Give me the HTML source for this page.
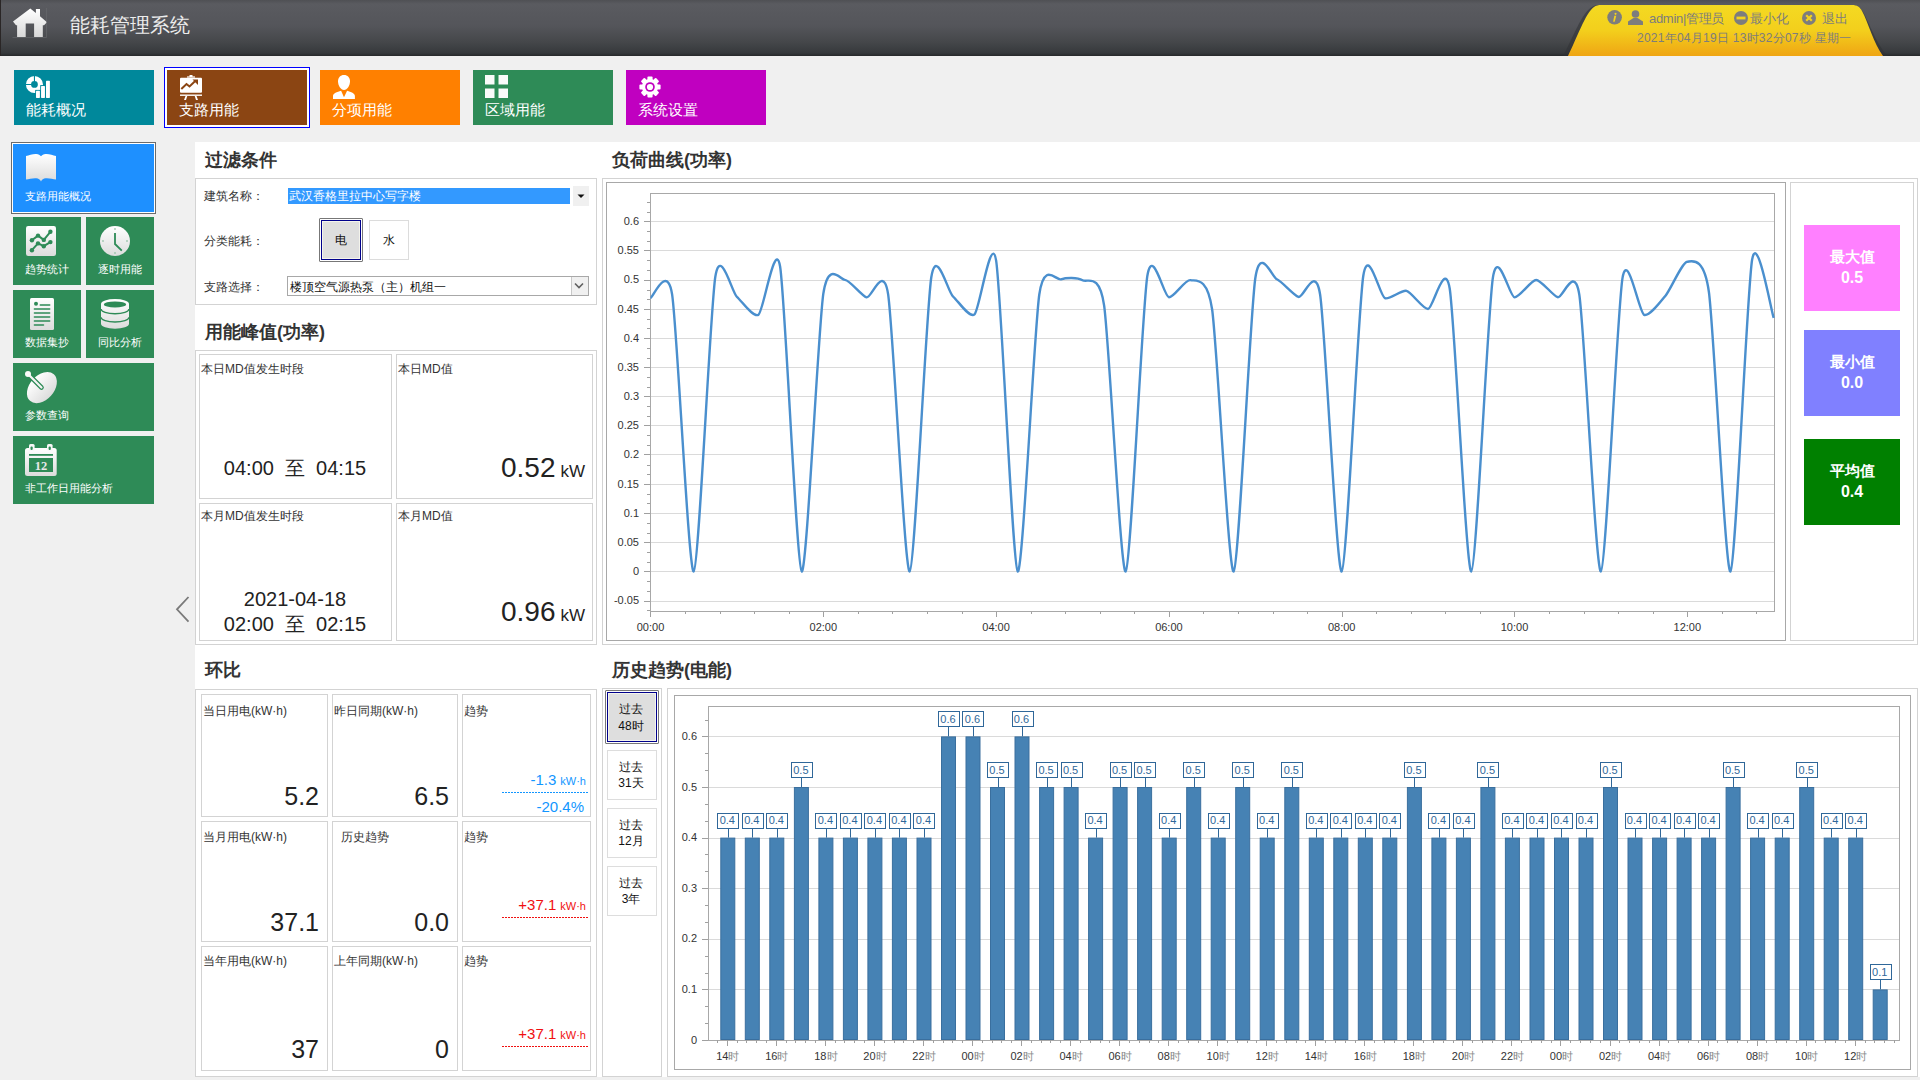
<!DOCTYPE html>
<html><head><meta charset="utf-8"><title>能耗管理系统</title>
<style>html,body{margin:0;padding:0;}body{width:1920px;height:1080px;overflow:hidden;position:relative;background:#f0f0f0;font-family:"Liberation Sans", sans-serif;}</style>
</head><body>
<div style="position:absolute;left:0;top:0;width:1920px;height:56px;background:linear-gradient(#4f5054 0px,#5a5b60 4px,#54555a 26px,#45474a 42px,#36393c 53px,#26282a 56px);"></div>
<div style="position:absolute;left:0;top:0;width:1px;height:56px;background:#2a2626;"></div>
<svg style="position:absolute;left:0;top:0" width="60" height="56" viewBox="0 0 60 56">
<defs><linearGradient id="hg" x1="0" y1="0" x2="0" y2="1"><stop offset="0" stop-color="#ffffff"/><stop offset="1" stop-color="#d8d8d8"/></linearGradient></defs>
<path d="M30.3 8.6 L35.9 13 L35.9 9.1 L40 9.1 L40 16.2 L47 22.3 L44 25.2 L42.8 25.2 L42.8 36.9 L34.1 36.9 L34.1 23.4 L25.7 23.4 L25.7 36.9 L17.1 36.9 L17.1 25.2 L16 25.2 L13 21.6 Z" fill="url(#hg)"/>
<path d="M12.5 37.5 H46.5 V8" stroke="#6a6b6f" stroke-width="0.6" fill="none"/>
</svg>
<div style="position:absolute;left:70px;top:11px;font-size:20px;line-height:28px;color:#ececec;font-family:'Liberation Sans', sans-serif;">能耗管理系统</div>
<svg style="position:absolute;left:1550px;top:0" width="350" height="56" viewBox="1550 0 350 56">
<defs><linearGradient id="tg" x1="0" y1="0" x2="0" y2="1"><stop offset="0" stop-color="#f4da22"/><stop offset="0.5" stop-color="#f3cf1c"/><stop offset="1" stop-color="#efa514"/></linearGradient></defs>
<path d="M1563 56 C1572 40 1582 12 1592 7 C1594 5.5 1596 5 1600 5 L1850 5 C1856 5 1860 7 1863 12 C1869 22 1877 46 1888 56 Z" fill="#2f3135" opacity="0.55"/>
<path d="M1568 56 C1576 40 1586 12 1594 7 C1596 5.5 1598 5 1602 5 L1852 5 C1857 5 1860 7 1862 11 C1868 22 1874 44 1883 56 Z" fill="url(#tg)"/>
</svg>
<svg style="position:absolute;left:1606px;top:9px" width="17" height="17" viewBox="0 0 17 17"><circle cx="8.6" cy="8.3" r="7.3" fill="#7d7d7d"/><path d="M9.6 3.8 a1 1 0 1 1 -0.1 0 Z M8.3 6.7 h2 l-1.6 6 h-1.6 z" fill="#f3d21e"/></svg>
<svg style="position:absolute;left:1627px;top:9px" width="17" height="17" viewBox="0 0 17 17"><circle cx="8.5" cy="5" r="3.8" fill="#7d7d7d"/><path d="M6.5 9 L10.5 9 L16 12.5 L16 16 L1 16 L1 12.5 Z" fill="#7d7d7d"/></svg>
<div style="position:absolute;left:1649px;top:10px;font-size:13px;line-height:18px;color:#7d7d7d;font-family:'Liberation Sans', sans-serif;white-space:nowrap;letter-spacing:-0.3px;">admin|管理员</div>
<svg style="position:absolute;left:1733px;top:10px" width="16" height="16" viewBox="0 0 16 16"><circle cx="8" cy="8" r="7" fill="#7d7d7d"/><rect x="3.5" y="6.6" width="9" height="2.8" fill="#f3d21e"/></svg>
<div style="position:absolute;left:1750px;top:10px;font-size:13px;line-height:18px;color:#7d7d7d;font-family:'Liberation Sans', sans-serif;white-space:nowrap;">最小化</div>
<svg style="position:absolute;left:1801px;top:10px" width="16" height="16" viewBox="0 0 16 16"><circle cx="8" cy="8" r="7" fill="#7d7d7d"/><path d="M5.2 5.2 L10.8 10.8 M10.8 5.2 L5.2 10.8" stroke="#f3d21e" stroke-width="2.2"/></svg>
<div style="position:absolute;left:1822px;top:10px;font-size:13px;line-height:18px;color:#7d7d7d;font-family:'Liberation Sans', sans-serif;white-space:nowrap;">退出</div>
<div style="position:absolute;left:1637px;top:30px;font-size:12px;line-height:17px;color:#7d7d7d;font-family:'Liberation Sans', sans-serif;white-space:nowrap;letter-spacing:0.25px;">2021年04月19日 13时32分07秒 星期一</div>
<div style="position:absolute;left:14px;top:70px;width:140px;height:55px;background:#00889b;"></div><div style="position:absolute;left:22px;top:72px;"><svg width="32" height="28" viewBox="0 0 32 28"><path d="M12.45 3.9 A8.55 8.55 0 1 0 12.45 21 A8.55 8.55 0 1 0 12.45 3.9 Z M12.45 9.05 A3.4 3.4 0 1 1 12.45 15.85 A3.4 3.4 0 1 1 12.45 9.05 Z" fill="#fff" fill-rule="evenodd"/><path d="M12.45 3 V9.5 M3 12.45 H9.5" stroke="#00889b" stroke-width="1.1"/><rect x="13.2" y="17.9" width="5.5" height="9.4" fill="#00889b"/><rect x="18.2" y="13.1" width="5.5" height="14" fill="#00889b"/><rect x="14" y="18.7" width="3.9" height="7.2" rx="0.6" fill="#fff"/><rect x="19.05" y="13.9" width="3.9" height="12" rx="0.6" fill="#fff"/><rect x="24" y="8.8" width="3.9" height="17.1" rx="0.6" fill="#fff"/></svg></div><div style="position:absolute;left:26px;top:100px;font-size:15px;line-height:20px;color:#fff;font-family:'Liberation Sans', sans-serif;white-space:nowrap;">能耗概况</div>
<div style="position:absolute;left:164px;top:67px;width:146px;height:61px;border:1px solid #0000ff;box-sizing:border-box;background:#ffffff"></div>
<div style="position:absolute;left:167px;top:70px;width:140px;height:55px;background:#8b4513;"></div><div style="position:absolute;left:179px;top:75px;"><svg width="24" height="25" viewBox="0 0 24 25"><rect x="10.5" y="0" width="3" height="2" fill="#fff"/><rect x="8" y="1.4" width="8" height="1.2" fill="#fff"/><rect x="1" y="2.7" width="22" height="15" rx="1" fill="#fff"/><path d="M2.3 14 L7.5 9 L10.5 11.5 L16 6.3" stroke="#8b4513" stroke-width="2" fill="none"/><path d="M13.5 4.5 L19 4.5 L19 10 Z" fill="#8b4513"/><rect x="1" y="19.5" width="22" height="1.4" fill="#fff"/><path d="M6.5 21 L5 25 H7 L8.3 21 Z M17.5 21 L19 25 H17 L15.7 21 Z" fill="#fff"/></svg></div><div style="position:absolute;left:179px;top:100px;font-size:15px;line-height:20px;color:#fff;font-family:'Liberation Sans', sans-serif;white-space:nowrap;">支路用能</div>
<div style="position:absolute;left:320px;top:70px;width:140px;height:55px;background:#ff8000;"></div><div style="position:absolute;left:333px;top:75px;"><svg width="22" height="24" viewBox="0 0 22 24"><path d="M11 0 C14.6 0 17 2.6 17 6.3 C17 10.5 14.3 15 11 15 C7.7 15 5 10.5 5 6.3 C5 2.6 7.4 0 11 0 Z" fill="#fff"/><path d="M0 23.9 L0 21 C0 18.5 4 16.8 8.1 15.8 L11 22.3 L14.1 15.8 C18 16.8 21.9 18.5 21.9 21 L21.9 23.9 Z" fill="#fff"/></svg></div><div style="position:absolute;left:332px;top:100px;font-size:15px;line-height:20px;color:#fff;font-family:'Liberation Sans', sans-serif;white-space:nowrap;">分项用能</div>
<div style="position:absolute;left:473px;top:70px;width:140px;height:55px;background:#2e8b57;"></div><div style="position:absolute;left:485px;top:75px;"><svg width="24" height="24" viewBox="0 0 24 24"><rect x="0" y="0" width="9.5" height="9.5" fill="#fafafa"/><rect x="13.5" y="0" width="9.5" height="9.5" fill="#fafafa"/><rect x="0" y="13.5" width="9.5" height="9.5" fill="#fafafa"/><rect x="13.5" y="13.5" width="9.5" height="9.5" fill="#fafafa"/></svg></div><div style="position:absolute;left:485px;top:100px;font-size:15px;line-height:20px;color:#fff;font-family:'Liberation Sans', sans-serif;white-space:nowrap;">区域用能</div>
<div style="position:absolute;left:626px;top:70px;width:140px;height:55px;background:#c000c0;"></div><div style="position:absolute;left:639px;top:76px;"><svg width="22" height="22" viewBox="-11 -11 22 22"><g fill="#fff"><rect x="-2.6" y="-10.6" width="5.2" height="5" rx="1" transform="rotate(0)"/><rect x="-2.6" y="-10.6" width="5.2" height="5" rx="1" transform="rotate(45)"/><rect x="-2.6" y="-10.6" width="5.2" height="5" rx="1" transform="rotate(90)"/><rect x="-2.6" y="-10.6" width="5.2" height="5" rx="1" transform="rotate(135)"/><rect x="-2.6" y="-10.6" width="5.2" height="5" rx="1" transform="rotate(180)"/><rect x="-2.6" y="-10.6" width="5.2" height="5" rx="1" transform="rotate(225)"/><rect x="-2.6" y="-10.6" width="5.2" height="5" rx="1" transform="rotate(270)"/><rect x="-2.6" y="-10.6" width="5.2" height="5" rx="1" transform="rotate(315)"/><circle r="8"/></g><circle r="4.8" fill="#c000c0"/><circle r="3.1" fill="#fff"/></svg></div><div style="position:absolute;left:638px;top:100px;font-size:15px;line-height:20px;color:#fff;font-family:'Liberation Sans', sans-serif;white-space:nowrap;">系统设置</div>
<div style="position:absolute;left:11px;top:142px;width:145px;height:72px;box-sizing:border-box;border:1px solid #6b6b6b;background:#fff;"></div>
<div style="position:absolute;left:13px;top:144px;width:141px;height:68px;background:#1e90ff;"></div>
<svg style="position:absolute;left:26px;top:154px" width="30" height="28" viewBox="0 0 30 28"><defs><linearGradient id="g_book" x1="0" y1="0" x2="0" y2="1"><stop offset="0" stop-color="#ffffff"/><stop offset="1" stop-color="#dcdcdc"/></linearGradient></defs><path d="M0 2 C3 1.5 7 -0.2 10.3 0.1 C12.5 0.3 14 1.2 15 2.3 C16 1.2 17.5 0.3 19.6 0.1 C23 -0.2 27 1.5 30 2 L30 25.5 C27 25 23 24 19.6 24.3 C17.5 24.5 16 25.5 15 27.4 C14 25.5 12.5 24.5 10.3 24.3 C7 24 3 25 0 25.5 Z" fill="url(#g_book)"/></svg>
<div style="position:absolute;left:25px;top:188px;font-size:11px;line-height:16px;color:#fff;font-family:'Liberation Sans', sans-serif;white-space:nowrap;">支路用能概况</div>
<div style="position:absolute;left:13px;top:217px;width:68px;height:68px;background:#2e8b57;"></div>
<div style="position:absolute;left:86px;top:217px;width:68px;height:68px;background:#2e8b57;"></div>
<div style="position:absolute;left:13px;top:290px;width:68px;height:68px;background:#2e8b57;"></div>
<div style="position:absolute;left:86px;top:290px;width:68px;height:68px;background:#2e8b57;"></div>
<div style="position:absolute;left:13px;top:363px;width:141px;height:68px;background:#2e8b57;"></div>
<div style="position:absolute;left:13px;top:436px;width:141px;height:68px;background:#2e8b57;"></div>
<svg style="position:absolute;left:26px;top:226px" width="30" height="30" viewBox="0 0 30 30"><defs><linearGradient id="g_trend" x1="0" y1="0" x2="0" y2="1"><stop offset="0" stop-color="#ffffff"/><stop offset="1" stop-color="#dcdcdc"/></linearGradient></defs><rect x="0" y="0" width="30" height="30" rx="2.2" fill="url(#g_trend)"/><path d="M5.9 14.2 L12 9.6 L17.8 13.9 L24.4 5.8 M5.9 24.2 L12 17.4 L17.8 20.2 L24.4 16.1" stroke="#2e8b57" stroke-width="2" fill="none" stroke-linejoin="round"/><circle cx="5.9" cy="14.2" r="2.2" fill="#2e8b57"/><circle cx="12" cy="9.6" r="2.2" fill="#2e8b57"/><circle cx="17.8" cy="13.9" r="2.2" fill="#2e8b57"/><circle cx="24.4" cy="5.8" r="2.2" fill="#2e8b57"/><circle cx="5.9" cy="24.2" r="2.2" fill="#2e8b57"/><circle cx="12" cy="17.4" r="2.2" fill="#2e8b57"/><circle cx="17.8" cy="20.2" r="2.2" fill="#2e8b57"/><circle cx="24.4" cy="16.1" r="2.2" fill="#2e8b57"/></svg>
<div style="position:absolute;left:25px;top:261px;font-size:11px;line-height:16px;color:#fff;font-family:'Liberation Sans', sans-serif;white-space:nowrap;">趋势统计</div>
<svg style="position:absolute;left:100px;top:226px" width="30" height="30" viewBox="0 0 30 30"><defs><linearGradient id="g_clock" x1="0" y1="0" x2="0" y2="1"><stop offset="0" stop-color="#ffffff"/><stop offset="1" stop-color="#dcdcdc"/></linearGradient></defs><circle cx="15" cy="15" r="15" fill="url(#g_clock)"/><path d="M15 7 L15 18 L21.8 24.6" stroke="#2e8b57" stroke-width="1.8" fill="none"/><rect x="14.3" y="2.3" width="1.4" height="1.4" fill="#7fb795"/><rect x="14.3" y="26.3" width="1.4" height="1.4" fill="#7fb795"/><rect x="2.3" y="14.3" width="1.4" height="1.4" fill="#7fb795"/><rect x="26.3" y="14.3" width="1.4" height="1.4" fill="#7fb795"/></svg>
<div style="position:absolute;left:98px;top:261px;font-size:11px;line-height:16px;color:#fff;font-family:'Liberation Sans', sans-serif;white-space:nowrap;">逐时用能</div>
<svg style="position:absolute;left:30px;top:298px" width="24" height="32" viewBox="0 0 24 32"><defs><linearGradient id="g_doc" x1="0" y1="0" x2="0" y2="1"><stop offset="0" stop-color="#ffffff"/><stop offset="1" stop-color="#dcdcdc"/></linearGradient></defs><rect x="0" y="0" width="24" height="32" rx="1.5" fill="url(#g_doc)"/><circle cx="6" cy="5.7" r="2" fill="#2e8b57"/><path d="M10.3 7 H19.7 M4.4 11 H19.7 M4.4 15 H19.7 M4.4 19 H19.7 M4.4 23 H19.7 M4.4 27 H13.5" stroke="#2e8b57" stroke-width="1.5" stroke-linecap="round"/></svg>
<div style="position:absolute;left:25px;top:334px;font-size:11px;line-height:16px;color:#fff;font-family:'Liberation Sans', sans-serif;white-space:nowrap;">数据集抄</div>
<svg style="position:absolute;left:101px;top:299px" width="28" height="30" viewBox="0 0 28 30"><defs><linearGradient id="g_db" x1="0" y1="0" x2="0" y2="1"><stop offset="0" stop-color="#ffffff"/><stop offset="1" stop-color="#dcdcdc"/></linearGradient></defs><path d="M0 5 A14 5 0 0 1 28 5 L28 24.7 A14 5 0 0 1 0 24.7 Z" fill="url(#g_db)"/><ellipse cx="14" cy="5.4" rx="11.2" ry="3" fill="#2e8b57"/><path d="M0 10 A14 4.8 0 0 0 28 10 M0 18.2 A14 4.8 0 0 0 28 18.2" stroke="#2e8b57" stroke-width="1.4" fill="none"/></svg>
<div style="position:absolute;left:98px;top:334px;font-size:11px;line-height:16px;color:#fff;font-family:'Liberation Sans', sans-serif;white-space:nowrap;">同比分析</div>
<div style="position:absolute;left:24px;top:370px;"><svg style="overflow:visible" width="36" height="36" viewBox="0 0 36 36"><defs><linearGradient id="g_sat" x1="0" y1="0" x2="0" y2="1"><stop offset="0" stop-color="#ffffff"/><stop offset="1" stop-color="#dcdcdc"/></linearGradient></defs><g transform="translate(2,2)"><ellipse cx="15.9" cy="15.6" rx="17.8" ry="12.2" transform="rotate(-48 15.9 15.6)" fill="url(#g_sat)"/><path d="M2 2 L15.5 15.5" stroke="#2e8b57" stroke-width="4.6" stroke-linecap="round"/><path d="M2 2 L15.5 15.5" stroke="#f4f4f4" stroke-width="2.2" stroke-linecap="round"/><circle cx="2" cy="2" r="3" fill="#fafafa"/></g></svg></div>
<div style="position:absolute;left:25px;top:407px;font-size:11px;line-height:16px;color:#fff;font-family:'Liberation Sans', sans-serif;white-space:nowrap;">参数查询</div>
<svg style="position:absolute;left:25px;top:444px" width="32" height="32" viewBox="0 0 32 32"><defs><linearGradient id="g_cal" x1="0" y1="0" x2="0" y2="1"><stop offset="0" stop-color="#ffffff"/><stop offset="1" stop-color="#dcdcdc"/></linearGradient></defs><rect x="0" y="4" width="31.7" height="28" rx="2.5" fill="url(#g_cal)"/><rect x="4" y="0" width="5.6" height="7" rx="1.5" fill="#f8f8f8"/><rect x="22" y="0" width="5.6" height="7" rx="1.5" fill="#f8f8f8"/><rect x="5.5" y="2.5" width="2.2" height="3.5" rx="1" fill="#2e8b57"/><rect x="23.6" y="2.5" width="2.2" height="3.5" rx="1" fill="#2e8b57"/><rect x="4" y="10" width="24" height="1.8" fill="#2e8b57"/><rect x="4" y="14" width="24" height="14" fill="#2e8b57"/><text x="16" y="26.2" text-anchor="middle" font-family="Liberation Serif" font-size="12.5" font-weight="bold" fill="#e8e8e8">12</text></svg>
<div style="position:absolute;left:25px;top:480px;font-size:11px;line-height:16px;color:#fff;font-family:'Liberation Sans', sans-serif;white-space:nowrap;">非工作日用能分析</div>
<svg style="position:absolute;left:170px;top:592px" width="24" height="36" viewBox="0 0 24 36"><path d="M18.5 5 L7 17.3 L18.5 29.6" stroke="#7a7a7a" stroke-width="1.8" fill="none"/></svg>
<div style="position:absolute;left:195px;top:142px;width:1725px;height:935px;background:#fff;"></div>
<div style="position:absolute;left:205px;top:148.0px;font-size:18px;line-height:24px;color:#333;font-family:'Liberation Sans', sans-serif;white-space:nowrap;font-weight:bold;">过滤条件</div>
<div style="position:absolute;left:612px;top:148.0px;font-size:18px;line-height:24px;color:#333;font-family:'Liberation Sans', sans-serif;white-space:nowrap;font-weight:bold;">负荷曲线(功率)</div>
<div style="position:absolute;left:205px;top:320.0px;font-size:18px;line-height:24px;color:#333;font-family:'Liberation Sans', sans-serif;white-space:nowrap;font-weight:bold;">用能峰值(功率)</div>
<div style="position:absolute;left:205px;top:658.0px;font-size:18px;line-height:24px;color:#333;font-family:'Liberation Sans', sans-serif;white-space:nowrap;font-weight:bold;">环比</div>
<div style="position:absolute;left:612px;top:658.0px;font-size:18px;line-height:24px;color:#333;font-family:'Liberation Sans', sans-serif;white-space:nowrap;font-weight:bold;">历史趋势(电能)</div>
<div style="position:absolute;left:195px;top:178px;width:402px;height:127px;box-sizing:border-box;border:1px solid #d3d3d3;"></div>
<div style="position:absolute;left:204px;top:188.0px;font-size:12px;line-height:16px;color:#333;font-family:'Liberation Sans', sans-serif;white-space:nowrap;">建筑名称：</div>
<div style="position:absolute;left:204px;top:233.0px;font-size:12px;line-height:16px;color:#333;font-family:'Liberation Sans', sans-serif;white-space:nowrap;">分类能耗：</div>
<div style="position:absolute;left:204px;top:279.0px;font-size:12px;line-height:16px;color:#333;font-family:'Liberation Sans', sans-serif;white-space:nowrap;">支路选择：</div>
<div style="position:absolute;left:288px;top:188px;width:282px;height:16px;background:#3399ff;"></div>
<div style="position:absolute;left:289px;top:188.0px;font-size:12px;line-height:16px;color:#fff;font-family:'Liberation Sans', sans-serif;white-space:nowrap;">武汉香格里拉中心写字楼</div>
<div style="position:absolute;left:573px;top:186px;width:16px;height:20px;background:#f0f0f0;"></div>
<svg style="position:absolute;left:576px;top:193px" width="10" height="6" viewBox="0 0 10 6"><path d="M1.5 1.5 H8.5 L5 5 Z" fill="#111"/></svg>
<div style="position:absolute;left:319px;top:218px;width:44px;height:44px;box-sizing:border-box;border:1px solid #777;background:#fff;border-radius:1px;"></div>
<div style="position:absolute;left:321px;top:220px;width:40px;height:40px;box-sizing:border-box;border:1px solid #00008b;background:#f4f4ec;"></div>
<div style="position:absolute;left:322px;top:221px;width:38px;height:38px;box-sizing:border-box;border:1px solid #f4f4ec;background:#dedede;"></div>
<div style="position:absolute;left:341px;transform:translateX(-50%);top:232.0px;font-size:12px;line-height:16px;color:#111;font-family:'Liberation Sans', sans-serif;white-space:nowrap;">电</div>
<div style="position:absolute;left:369px;top:220px;width:40px;height:40px;box-sizing:border-box;border:1px solid #dcdcdc;background:#fff;"></div>
<div style="position:absolute;left:389px;transform:translateX(-50%);top:232.0px;font-size:12px;line-height:16px;color:#111;font-family:'Liberation Sans', sans-serif;white-space:nowrap;">水</div>
<div style="position:absolute;left:287px;top:276px;width:302px;height:20px;box-sizing:border-box;border:1px solid #a8a8a8;background:#fff;"></div>
<div style="position:absolute;left:571px;top:277px;width:16px;height:18px;background:#f0f0f0;border-left:1px solid #c8c8c8;"></div>
<svg style="position:absolute;left:573px;top:281px" width="12" height="10" viewBox="0 0 12 10"><path d="M2 2.5 L6 6.5 L10 2.5" stroke="#606060" stroke-width="1.6" fill="none"/></svg>
<div style="position:absolute;left:290px;top:279.0px;font-size:12px;line-height:16px;color:#111;font-family:'Liberation Sans', sans-serif;white-space:nowrap;">楼顶空气源热泵（主）机组一</div>
<div style="position:absolute;left:195px;top:350px;width:402px;height:295px;box-sizing:border-box;border:1px solid #d3d3d3;"></div>
<div style="position:absolute;left:199px;top:354px;width:193px;height:145px;box-sizing:border-box;border:1px solid #d3d3d3;"></div>
<div style="position:absolute;left:396px;top:354px;width:197px;height:145px;box-sizing:border-box;border:1px solid #d3d3d3;"></div>
<div style="position:absolute;left:199px;top:503px;width:193px;height:138px;box-sizing:border-box;border:1px solid #d3d3d3;"></div>
<div style="position:absolute;left:396px;top:503px;width:197px;height:138px;box-sizing:border-box;border:1px solid #d3d3d3;"></div>
<div style="position:absolute;left:201px;top:361.0px;font-size:12px;line-height:16px;color:#333;font-family:'Liberation Sans', sans-serif;white-space:nowrap;">本日MD值发生时段</div>
<div style="position:absolute;left:398px;top:361.0px;font-size:12px;line-height:16px;color:#333;font-family:'Liberation Sans', sans-serif;white-space:nowrap;">本日MD值</div>
<div style="position:absolute;left:201px;top:508.0px;font-size:12px;line-height:16px;color:#333;font-family:'Liberation Sans', sans-serif;white-space:nowrap;">本月MD值发生时段</div>
<div style="position:absolute;left:398px;top:508.0px;font-size:12px;line-height:16px;color:#333;font-family:'Liberation Sans', sans-serif;white-space:nowrap;">本月MD值</div>
<div style="position:absolute;left:295px;transform:translateX(-50%);top:456.0px;font-size:20px;line-height:24px;color:#222;font-family:'Liberation Sans', sans-serif;white-space:nowrap;">04:00&nbsp;&nbsp;至&nbsp;&nbsp;04:15</div>
<div style="position:absolute;left:295px;transform:translateX(-50%);top:587.0px;font-size:20px;line-height:24px;color:#222;font-family:'Liberation Sans', sans-serif;white-space:nowrap;">2021-04-18</div>
<div style="position:absolute;left:295px;transform:translateX(-50%);top:612.0px;font-size:20px;line-height:24px;color:#222;font-family:'Liberation Sans', sans-serif;white-space:nowrap;">02:00&nbsp;&nbsp;至&nbsp;&nbsp;02:15</div>
<div style="position:absolute;right:1335px;top:452px;font-family:'Liberation Sans', sans-serif;color:#222;white-space:nowrap;"><span style="font-size:28px;">0.52</span><span style="font-size:17px;margin-left:5px;">kW</span></div>
<div style="position:absolute;right:1335px;top:596px;font-family:'Liberation Sans', sans-serif;color:#222;white-space:nowrap;"><span style="font-size:28px;">0.96</span><span style="font-size:17px;margin-left:5px;">kW</span></div>
<div style="position:absolute;left:195px;top:689px;width:402px;height:388px;box-sizing:border-box;border:1px solid #d3d3d3;"></div>
<div style="position:absolute;left:201px;top:694px;width:127px;height:123px;box-sizing:border-box;border:1px solid #d3d3d3;"></div>
<div style="position:absolute;left:332px;top:694px;width:126px;height:123px;box-sizing:border-box;border:1px solid #d3d3d3;"></div>
<div style="position:absolute;left:462px;top:694px;width:129px;height:123px;box-sizing:border-box;border:1px solid #d3d3d3;"></div>
<div style="position:absolute;left:201px;top:821px;width:127px;height:121px;box-sizing:border-box;border:1px solid #d3d3d3;"></div>
<div style="position:absolute;left:332px;top:821px;width:126px;height:121px;box-sizing:border-box;border:1px solid #d3d3d3;"></div>
<div style="position:absolute;left:462px;top:821px;width:129px;height:121px;box-sizing:border-box;border:1px solid #d3d3d3;"></div>
<div style="position:absolute;left:201px;top:946px;width:127px;height:125px;box-sizing:border-box;border:1px solid #d3d3d3;"></div>
<div style="position:absolute;left:332px;top:946px;width:126px;height:125px;box-sizing:border-box;border:1px solid #d3d3d3;"></div>
<div style="position:absolute;left:462px;top:946px;width:129px;height:125px;box-sizing:border-box;border:1px solid #d3d3d3;"></div>
<div style="position:absolute;left:203px;top:703.0px;font-size:12px;line-height:16px;color:#333;font-family:'Liberation Sans', sans-serif;white-space:nowrap;">当日用电(kW·h)</div>
<div style="position:absolute;left:334px;top:703.0px;font-size:12px;line-height:16px;color:#333;font-family:'Liberation Sans', sans-serif;white-space:nowrap;">昨日同期(kW·h)</div>
<div style="position:absolute;left:464px;top:703.0px;font-size:12px;line-height:16px;color:#333;font-family:'Liberation Sans', sans-serif;white-space:nowrap;">趋势</div>
<div style="position:absolute;right:1601px;top:781.5px;font-size:25px;line-height:29px;color:#222;font-family:'Liberation Sans', sans-serif;white-space:nowrap;">5.2</div>
<div style="position:absolute;right:1471px;top:781.5px;font-size:25px;line-height:29px;color:#222;font-family:'Liberation Sans', sans-serif;white-space:nowrap;">6.5</div>
<div style="position:absolute;left:203px;top:829.0px;font-size:12px;line-height:16px;color:#333;font-family:'Liberation Sans', sans-serif;white-space:nowrap;">当月用电(kW·h)</div>
<div style="position:absolute;left:334px;top:829.0px;font-size:12px;line-height:16px;color:#333;font-family:'Liberation Sans', sans-serif;white-space:nowrap;">&nbsp;&nbsp;历史趋势</div>
<div style="position:absolute;left:464px;top:829.0px;font-size:12px;line-height:16px;color:#333;font-family:'Liberation Sans', sans-serif;white-space:nowrap;">趋势</div>
<div style="position:absolute;right:1601px;top:907.5px;font-size:25px;line-height:29px;color:#222;font-family:'Liberation Sans', sans-serif;white-space:nowrap;">37.1</div>
<div style="position:absolute;right:1471px;top:907.5px;font-size:25px;line-height:29px;color:#222;font-family:'Liberation Sans', sans-serif;white-space:nowrap;">0.0</div>
<div style="position:absolute;left:203px;top:953.0px;font-size:12px;line-height:16px;color:#333;font-family:'Liberation Sans', sans-serif;white-space:nowrap;">当年用电(kW·h)</div>
<div style="position:absolute;left:334px;top:953.0px;font-size:12px;line-height:16px;color:#333;font-family:'Liberation Sans', sans-serif;white-space:nowrap;">上年同期(kW·h)</div>
<div style="position:absolute;left:464px;top:953.0px;font-size:12px;line-height:16px;color:#333;font-family:'Liberation Sans', sans-serif;white-space:nowrap;">趋势</div>
<div style="position:absolute;right:1601px;top:1034.5px;font-size:25px;line-height:29px;color:#222;font-family:'Liberation Sans', sans-serif;white-space:nowrap;">37</div>
<div style="position:absolute;right:1471px;top:1034.5px;font-size:25px;line-height:29px;color:#222;font-family:'Liberation Sans', sans-serif;white-space:nowrap;">0</div>
<div style="position:absolute;right:1334px;top:771px;font-family:'Liberation Sans', sans-serif;color:#1296ff;white-space:nowrap;line-height:18px;"><span style="font-size:15px;">-1.3</span><span style="font-size:11px;margin-left:4px;">kW·h</span></div><div style="position:absolute;left:502px;top:792px;width:86px;height:1px;background:repeating-linear-gradient(90deg,#1296ff 0px,#1296ff 2px,transparent 2px,transparent 3px);"></div>
<div style="position:absolute;right:1336px;top:796.5px;font-size:15px;line-height:19px;color:#1296ff;font-family:'Liberation Sans', sans-serif;white-space:nowrap;">-20.4%</div>
<div style="position:absolute;right:1334px;top:896px;font-family:'Liberation Sans', sans-serif;color:#f01010;white-space:nowrap;line-height:18px;"><span style="font-size:15px;">+37.1</span><span style="font-size:11px;margin-left:4px;">kW·h</span></div><div style="position:absolute;left:502px;top:917px;width:86px;height:1px;background:repeating-linear-gradient(90deg,#f01010 0px,#f01010 2px,transparent 2px,transparent 3px);"></div>
<div style="position:absolute;right:1334px;top:1025px;font-family:'Liberation Sans', sans-serif;color:#f01010;white-space:nowrap;line-height:18px;"><span style="font-size:15px;">+37.1</span><span style="font-size:11px;margin-left:4px;">kW·h</span></div><div style="position:absolute;left:502px;top:1046px;width:86px;height:1px;background:repeating-linear-gradient(90deg,#f01010 0px,#f01010 2px,transparent 2px,transparent 3px);"></div>
<div style="position:absolute;left:602px;top:178px;width:1316px;height:467px;box-sizing:border-box;border:1px solid #d3d3d3;"></div>
<div style="position:absolute;left:606px;top:182px;width:1180px;height:459px;box-sizing:border-box;border:1px solid #a8a8a8;"></div>
<div style="position:absolute;left:1790px;top:182px;width:124px;height:459px;box-sizing:border-box;border:1px solid #d3d3d3;"></div>
<svg style="position:absolute;left:0;top:0" width="1920" height="1080" viewBox="0 0 1920 1080">
<line x1="651" y1="601.5" x2="1774" y2="601.5" stroke="#dadada" stroke-width="1"/>
<line x1="644" y1="601.5" x2="650" y2="601.5" stroke="#a0a0a0" stroke-width="1"/>
<line x1="651" y1="571.5" x2="1774" y2="571.5" stroke="#dadada" stroke-width="1"/>
<line x1="644" y1="571.5" x2="650" y2="571.5" stroke="#a0a0a0" stroke-width="1"/>
<line x1="651" y1="542.5" x2="1774" y2="542.5" stroke="#dadada" stroke-width="1"/>
<line x1="644" y1="542.5" x2="650" y2="542.5" stroke="#a0a0a0" stroke-width="1"/>
<line x1="651" y1="513.5" x2="1774" y2="513.5" stroke="#dadada" stroke-width="1"/>
<line x1="644" y1="513.5" x2="650" y2="513.5" stroke="#a0a0a0" stroke-width="1"/>
<line x1="651" y1="484.5" x2="1774" y2="484.5" stroke="#dadada" stroke-width="1"/>
<line x1="644" y1="484.5" x2="650" y2="484.5" stroke="#a0a0a0" stroke-width="1"/>
<line x1="651" y1="454.5" x2="1774" y2="454.5" stroke="#dadada" stroke-width="1"/>
<line x1="644" y1="454.5" x2="650" y2="454.5" stroke="#a0a0a0" stroke-width="1"/>
<line x1="651" y1="425.5" x2="1774" y2="425.5" stroke="#dadada" stroke-width="1"/>
<line x1="644" y1="425.5" x2="650" y2="425.5" stroke="#a0a0a0" stroke-width="1"/>
<line x1="651" y1="396.5" x2="1774" y2="396.5" stroke="#dadada" stroke-width="1"/>
<line x1="644" y1="396.5" x2="650" y2="396.5" stroke="#a0a0a0" stroke-width="1"/>
<line x1="651" y1="367.5" x2="1774" y2="367.5" stroke="#dadada" stroke-width="1"/>
<line x1="644" y1="367.5" x2="650" y2="367.5" stroke="#a0a0a0" stroke-width="1"/>
<line x1="651" y1="338.5" x2="1774" y2="338.5" stroke="#dadada" stroke-width="1"/>
<line x1="644" y1="338.5" x2="650" y2="338.5" stroke="#a0a0a0" stroke-width="1"/>
<line x1="651" y1="309.5" x2="1774" y2="309.5" stroke="#dadada" stroke-width="1"/>
<line x1="644" y1="309.5" x2="650" y2="309.5" stroke="#a0a0a0" stroke-width="1"/>
<line x1="651" y1="280.5" x2="1774" y2="280.5" stroke="#dadada" stroke-width="1"/>
<line x1="644" y1="280.5" x2="650" y2="280.5" stroke="#a0a0a0" stroke-width="1"/>
<line x1="651" y1="250.5" x2="1774" y2="250.5" stroke="#dadada" stroke-width="1"/>
<line x1="644" y1="250.5" x2="650" y2="250.5" stroke="#a0a0a0" stroke-width="1"/>
<line x1="651" y1="221.5" x2="1774" y2="221.5" stroke="#dadada" stroke-width="1"/>
<line x1="644" y1="221.5" x2="650" y2="221.5" stroke="#a0a0a0" stroke-width="1"/>
<line x1="647" y1="610.5" x2="650" y2="610.5" stroke="#a0a0a0" stroke-width="1"/>
<line x1="647" y1="591.5" x2="650" y2="591.5" stroke="#a0a0a0" stroke-width="1"/>
<line x1="647" y1="581.5" x2="650" y2="581.5" stroke="#a0a0a0" stroke-width="1"/>
<line x1="647" y1="562.5" x2="650" y2="562.5" stroke="#a0a0a0" stroke-width="1"/>
<line x1="647" y1="552.5" x2="650" y2="552.5" stroke="#a0a0a0" stroke-width="1"/>
<line x1="647" y1="533.5" x2="650" y2="533.5" stroke="#a0a0a0" stroke-width="1"/>
<line x1="647" y1="523.5" x2="650" y2="523.5" stroke="#a0a0a0" stroke-width="1"/>
<line x1="647" y1="503.5" x2="650" y2="503.5" stroke="#a0a0a0" stroke-width="1"/>
<line x1="647" y1="494.5" x2="650" y2="494.5" stroke="#a0a0a0" stroke-width="1"/>
<line x1="647" y1="474.5" x2="650" y2="474.5" stroke="#a0a0a0" stroke-width="1"/>
<line x1="647" y1="465.5" x2="650" y2="465.5" stroke="#a0a0a0" stroke-width="1"/>
<line x1="647" y1="445.5" x2="650" y2="445.5" stroke="#a0a0a0" stroke-width="1"/>
<line x1="647" y1="435.5" x2="650" y2="435.5" stroke="#a0a0a0" stroke-width="1"/>
<line x1="647" y1="416.5" x2="650" y2="416.5" stroke="#a0a0a0" stroke-width="1"/>
<line x1="647" y1="406.5" x2="650" y2="406.5" stroke="#a0a0a0" stroke-width="1"/>
<line x1="647" y1="387.5" x2="650" y2="387.5" stroke="#a0a0a0" stroke-width="1"/>
<line x1="647" y1="377.5" x2="650" y2="377.5" stroke="#a0a0a0" stroke-width="1"/>
<line x1="647" y1="358.5" x2="650" y2="358.5" stroke="#a0a0a0" stroke-width="1"/>
<line x1="647" y1="348.5" x2="650" y2="348.5" stroke="#a0a0a0" stroke-width="1"/>
<line x1="647" y1="328.5" x2="650" y2="328.5" stroke="#a0a0a0" stroke-width="1"/>
<line x1="647" y1="319.5" x2="650" y2="319.5" stroke="#a0a0a0" stroke-width="1"/>
<line x1="647" y1="299.5" x2="650" y2="299.5" stroke="#a0a0a0" stroke-width="1"/>
<line x1="647" y1="290.5" x2="650" y2="290.5" stroke="#a0a0a0" stroke-width="1"/>
<line x1="647" y1="270.5" x2="650" y2="270.5" stroke="#a0a0a0" stroke-width="1"/>
<line x1="647" y1="260.5" x2="650" y2="260.5" stroke="#a0a0a0" stroke-width="1"/>
<line x1="647" y1="241.5" x2="650" y2="241.5" stroke="#a0a0a0" stroke-width="1"/>
<line x1="647" y1="231.5" x2="650" y2="231.5" stroke="#a0a0a0" stroke-width="1"/>
<line x1="647" y1="212.5" x2="650" y2="212.5" stroke="#a0a0a0" stroke-width="1"/>
<line x1="647" y1="202.5" x2="650" y2="202.5" stroke="#a0a0a0" stroke-width="1"/>
<line x1="650.5" y1="611" x2="650.5" y2="617" stroke="#a0a0a0" stroke-width="1"/>
<line x1="823.5" y1="611" x2="823.5" y2="617" stroke="#a0a0a0" stroke-width="1"/>
<line x1="996.5" y1="611" x2="996.5" y2="617" stroke="#a0a0a0" stroke-width="1"/>
<line x1="1169.5" y1="611" x2="1169.5" y2="617" stroke="#a0a0a0" stroke-width="1"/>
<line x1="1342.5" y1="611" x2="1342.5" y2="617" stroke="#a0a0a0" stroke-width="1"/>
<line x1="1514.5" y1="611" x2="1514.5" y2="617" stroke="#a0a0a0" stroke-width="1"/>
<line x1="1687.5" y1="611" x2="1687.5" y2="617" stroke="#a0a0a0" stroke-width="1"/>
<line x1="685.5" y1="611" x2="685.5" y2="614" stroke="#a0a0a0" stroke-width="1"/>
<line x1="720.5" y1="611" x2="720.5" y2="614" stroke="#a0a0a0" stroke-width="1"/>
<line x1="754.5" y1="611" x2="754.5" y2="614" stroke="#a0a0a0" stroke-width="1"/>
<line x1="789.5" y1="611" x2="789.5" y2="614" stroke="#a0a0a0" stroke-width="1"/>
<line x1="858.5" y1="611" x2="858.5" y2="614" stroke="#a0a0a0" stroke-width="1"/>
<line x1="892.5" y1="611" x2="892.5" y2="614" stroke="#a0a0a0" stroke-width="1"/>
<line x1="927.5" y1="611" x2="927.5" y2="614" stroke="#a0a0a0" stroke-width="1"/>
<line x1="962.5" y1="611" x2="962.5" y2="614" stroke="#a0a0a0" stroke-width="1"/>
<line x1="1031.5" y1="611" x2="1031.5" y2="614" stroke="#a0a0a0" stroke-width="1"/>
<line x1="1065.5" y1="611" x2="1065.5" y2="614" stroke="#a0a0a0" stroke-width="1"/>
<line x1="1100.5" y1="611" x2="1100.5" y2="614" stroke="#a0a0a0" stroke-width="1"/>
<line x1="1134.5" y1="611" x2="1134.5" y2="614" stroke="#a0a0a0" stroke-width="1"/>
<line x1="1203.5" y1="611" x2="1203.5" y2="614" stroke="#a0a0a0" stroke-width="1"/>
<line x1="1238.5" y1="611" x2="1238.5" y2="614" stroke="#a0a0a0" stroke-width="1"/>
<line x1="1273.5" y1="611" x2="1273.5" y2="614" stroke="#a0a0a0" stroke-width="1"/>
<line x1="1307.5" y1="611" x2="1307.5" y2="614" stroke="#a0a0a0" stroke-width="1"/>
<line x1="1376.5" y1="611" x2="1376.5" y2="614" stroke="#a0a0a0" stroke-width="1"/>
<line x1="1411.5" y1="611" x2="1411.5" y2="614" stroke="#a0a0a0" stroke-width="1"/>
<line x1="1445.5" y1="611" x2="1445.5" y2="614" stroke="#a0a0a0" stroke-width="1"/>
<line x1="1480.5" y1="611" x2="1480.5" y2="614" stroke="#a0a0a0" stroke-width="1"/>
<line x1="1549.5" y1="611" x2="1549.5" y2="614" stroke="#a0a0a0" stroke-width="1"/>
<line x1="1584.5" y1="611" x2="1584.5" y2="614" stroke="#a0a0a0" stroke-width="1"/>
<line x1="1618.5" y1="611" x2="1618.5" y2="614" stroke="#a0a0a0" stroke-width="1"/>
<line x1="1653.5" y1="611" x2="1653.5" y2="614" stroke="#a0a0a0" stroke-width="1"/>
<line x1="1722.5" y1="611" x2="1722.5" y2="614" stroke="#a0a0a0" stroke-width="1"/>
<line x1="1756.5" y1="611" x2="1756.5" y2="614" stroke="#a0a0a0" stroke-width="1"/>
<rect x="650.5" y="193.5" width="1124" height="418" fill="none" stroke="#a8a8a8" stroke-width="1"/>
<path d="M650.50 298.17 C653.02 297.72 667.06 262.49 672.10 294.37 C677.14 326.26 688.66 573.53 693.70 571.50 C698.74 569.47 710.26 308.98 715.30 276.93 C720.34 244.89 731.86 292.42 736.90 296.82 C741.94 301.23 753.46 318.20 758.50 314.67 C763.54 311.14 775.06 236.59 780.10 266.55 C785.14 296.51 796.66 568.31 801.70 571.50 C806.74 574.69 818.26 327.93 823.30 293.91 C828.34 259.88 839.86 279.46 844.90 279.85 C849.94 280.24 861.46 295.63 866.50 297.29 C871.54 298.95 883.06 262.09 888.10 294.08 C893.14 326.07 904.66 573.47 909.70 571.50 C914.74 569.53 926.26 309.33 931.30 277.23 C936.34 245.12 947.86 291.96 952.90 296.30 C957.94 300.64 969.46 318.63 974.50 314.44 C979.54 310.25 991.06 230.38 996.10 260.37 C1001.14 290.36 1012.66 567.52 1017.70 571.50 C1022.74 575.48 1034.26 328.58 1039.30 294.49 C1044.34 260.40 1055.86 280.93 1060.90 279.27 C1065.94 277.60 1077.46 277.15 1082.50 280.20 C1087.54 283.25 1099.06 271.41 1104.10 305.40 C1109.14 339.38 1120.66 574.91 1125.70 571.50 C1130.74 568.09 1142.26 308.17 1147.30 276.18 C1152.34 244.18 1163.86 296.77 1168.90 297.23 C1173.94 297.70 1185.46 278.74 1190.50 280.14 C1195.54 281.54 1207.06 275.26 1212.10 309.25 C1217.14 343.24 1228.66 575.11 1233.70 571.50 C1238.74 567.89 1250.26 312.37 1255.30 278.28 C1260.34 244.18 1271.86 277.09 1276.90 279.27 C1281.94 281.44 1293.46 295.16 1298.50 296.94 C1303.54 298.72 1315.06 262.46 1320.10 294.49 C1325.14 326.52 1336.66 573.69 1341.70 571.50 C1346.74 569.31 1358.26 307.60 1363.30 275.71 C1368.34 243.82 1379.86 296.40 1384.90 298.17 C1389.94 299.93 1401.46 289.62 1406.50 290.87 C1411.54 292.13 1423.06 309.23 1428.10 308.96 C1433.14 308.68 1444.66 257.91 1449.70 288.54 C1454.74 319.17 1466.26 572.78 1471.30 571.50 C1476.34 570.22 1487.86 309.56 1492.90 277.58 C1497.94 245.59 1509.46 297.07 1514.50 297.35 C1519.54 297.63 1531.06 279.98 1536.10 279.97 C1541.14 279.95 1552.66 295.52 1557.70 297.23 C1562.74 298.95 1574.26 262.67 1579.30 294.67 C1584.34 326.66 1595.86 573.43 1600.90 571.50 C1605.94 569.57 1617.46 308.05 1622.50 278.10 C1627.54 248.15 1639.06 312.77 1644.10 314.79 C1649.14 316.81 1660.66 301.62 1665.70 295.42 C1670.74 289.23 1682.26 262.10 1687.30 261.71 C1692.34 261.31 1703.86 255.90 1708.90 292.04 C1713.94 328.18 1725.46 575.26 1730.50 571.50 C1735.54 567.74 1747.06 289.37 1752.10 259.78 C1757.14 230.20 1771.18 311.10 1773.70 317.88" fill="none" stroke="#4a8fce" stroke-width="2.4" stroke-linejoin="round"/>
</svg>
<div style="position:absolute;right:1281px;top:593.165px;font-size:11px;line-height:15px;color:#333;font-family:'Liberation Sans', sans-serif;white-space:nowrap;">-0.05</div>
<div style="position:absolute;right:1281px;top:564.0px;font-size:11px;line-height:15px;color:#333;font-family:'Liberation Sans', sans-serif;white-space:nowrap;">0</div>
<div style="position:absolute;right:1281px;top:534.835px;font-size:11px;line-height:15px;color:#333;font-family:'Liberation Sans', sans-serif;white-space:nowrap;">0.05</div>
<div style="position:absolute;right:1281px;top:505.66999999999996px;font-size:11px;line-height:15px;color:#333;font-family:'Liberation Sans', sans-serif;white-space:nowrap;">0.1</div>
<div style="position:absolute;right:1281px;top:476.505px;font-size:11px;line-height:15px;color:#333;font-family:'Liberation Sans', sans-serif;white-space:nowrap;">0.15</div>
<div style="position:absolute;right:1281px;top:447.34000000000003px;font-size:11px;line-height:15px;color:#333;font-family:'Liberation Sans', sans-serif;white-space:nowrap;">0.2</div>
<div style="position:absolute;right:1281px;top:418.175px;font-size:11px;line-height:15px;color:#333;font-family:'Liberation Sans', sans-serif;white-space:nowrap;">0.25</div>
<div style="position:absolute;right:1281px;top:389.01px;font-size:11px;line-height:15px;color:#333;font-family:'Liberation Sans', sans-serif;white-space:nowrap;">0.3</div>
<div style="position:absolute;right:1281px;top:359.845px;font-size:11px;line-height:15px;color:#333;font-family:'Liberation Sans', sans-serif;white-space:nowrap;">0.35</div>
<div style="position:absolute;right:1281px;top:330.68px;font-size:11px;line-height:15px;color:#333;font-family:'Liberation Sans', sans-serif;white-space:nowrap;">0.4</div>
<div style="position:absolute;right:1281px;top:301.515px;font-size:11px;line-height:15px;color:#333;font-family:'Liberation Sans', sans-serif;white-space:nowrap;">0.45</div>
<div style="position:absolute;right:1281px;top:272.35px;font-size:11px;line-height:15px;color:#333;font-family:'Liberation Sans', sans-serif;white-space:nowrap;">0.5</div>
<div style="position:absolute;right:1281px;top:243.185px;font-size:11px;line-height:15px;color:#333;font-family:'Liberation Sans', sans-serif;white-space:nowrap;">0.55</div>
<div style="position:absolute;right:1281px;top:214.01999999999998px;font-size:11px;line-height:15px;color:#333;font-family:'Liberation Sans', sans-serif;white-space:nowrap;">0.6</div>
<div style="position:absolute;left:650.5px;transform:translateX(-50%);top:619.5px;font-size:11px;line-height:15px;color:#333;font-family:'Liberation Sans', sans-serif;white-space:nowrap;">00:00</div>
<div style="position:absolute;left:823.3px;transform:translateX(-50%);top:619.5px;font-size:11px;line-height:15px;color:#333;font-family:'Liberation Sans', sans-serif;white-space:nowrap;">02:00</div>
<div style="position:absolute;left:996.1px;transform:translateX(-50%);top:619.5px;font-size:11px;line-height:15px;color:#333;font-family:'Liberation Sans', sans-serif;white-space:nowrap;">04:00</div>
<div style="position:absolute;left:1168.9px;transform:translateX(-50%);top:619.5px;font-size:11px;line-height:15px;color:#333;font-family:'Liberation Sans', sans-serif;white-space:nowrap;">06:00</div>
<div style="position:absolute;left:1341.7px;transform:translateX(-50%);top:619.5px;font-size:11px;line-height:15px;color:#333;font-family:'Liberation Sans', sans-serif;white-space:nowrap;">08:00</div>
<div style="position:absolute;left:1514.5px;transform:translateX(-50%);top:619.5px;font-size:11px;line-height:15px;color:#333;font-family:'Liberation Sans', sans-serif;white-space:nowrap;">10:00</div>
<div style="position:absolute;left:1687.3000000000002px;transform:translateX(-50%);top:619.5px;font-size:11px;line-height:15px;color:#333;font-family:'Liberation Sans', sans-serif;white-space:nowrap;">12:00</div>
<div style="position:absolute;left:1804px;top:225px;width:96px;height:86px;background:#ff80ff;"></div>
<div style="position:absolute;left:1852px;transform:translateX(-50%);top:246.5px;font-size:15px;line-height:19px;color:#fff;font-family:'Liberation Sans', sans-serif;white-space:nowrap;font-weight:bold;">最大值</div>
<div style="position:absolute;left:1852px;transform:translateX(-50%);top:268.0px;font-size:16px;line-height:20px;color:#fff;font-family:'Liberation Sans', sans-serif;white-space:nowrap;font-weight:bold;">0.5</div>
<div style="position:absolute;left:1804px;top:330px;width:96px;height:86px;background:#8080ff;"></div>
<div style="position:absolute;left:1852px;transform:translateX(-50%);top:351.5px;font-size:15px;line-height:19px;color:#fff;font-family:'Liberation Sans', sans-serif;white-space:nowrap;font-weight:bold;">最小值</div>
<div style="position:absolute;left:1852px;transform:translateX(-50%);top:373.0px;font-size:16px;line-height:20px;color:#fff;font-family:'Liberation Sans', sans-serif;white-space:nowrap;font-weight:bold;">0.0</div>
<div style="position:absolute;left:1804px;top:439px;width:96px;height:86px;background:#008000;"></div>
<div style="position:absolute;left:1852px;transform:translateX(-50%);top:460.5px;font-size:15px;line-height:19px;color:#fff;font-family:'Liberation Sans', sans-serif;white-space:nowrap;font-weight:bold;">平均值</div>
<div style="position:absolute;left:1852px;transform:translateX(-50%);top:482.0px;font-size:16px;line-height:20px;color:#fff;font-family:'Liberation Sans', sans-serif;white-space:nowrap;font-weight:bold;">0.4</div>
<div style="position:absolute;left:602px;top:688px;width:60px;height:389px;box-sizing:border-box;border:1px solid #d3d3d3;"></div>
<div style="position:absolute;left:605px;top:690px;width:54px;height:54px;box-sizing:border-box;border:1px solid #777;background:#fff;border-radius:1px;"></div>
<div style="position:absolute;left:607px;top:692px;width:50px;height:50px;box-sizing:border-box;border:1px solid #00008b;background:#f4f4ec;"></div>
<div style="position:absolute;left:608px;top:693px;width:48px;height:48px;box-sizing:border-box;border:1px solid #f4f4ec;background:#dedede;"></div>
<div style="position:absolute;left:607px;top:750px;width:50px;height:50px;box-sizing:border-box;border:1px solid #dddddd;background:#fff;"></div>
<div style="position:absolute;left:631px;transform:translateX(-50%);top:759.0px;font-size:12px;line-height:16px;color:#111;font-family:'Liberation Sans', sans-serif;white-space:nowrap;">过去</div>
<div style="position:absolute;left:631px;transform:translateX(-50%);top:775.0px;font-size:12px;line-height:16px;color:#111;font-family:'Liberation Sans', sans-serif;white-space:nowrap;">31天</div>
<div style="position:absolute;left:607px;top:808px;width:50px;height:50px;box-sizing:border-box;border:1px solid #dddddd;background:#fff;"></div>
<div style="position:absolute;left:631px;transform:translateX(-50%);top:817.0px;font-size:12px;line-height:16px;color:#111;font-family:'Liberation Sans', sans-serif;white-space:nowrap;">过去</div>
<div style="position:absolute;left:631px;transform:translateX(-50%);top:833.0px;font-size:12px;line-height:16px;color:#111;font-family:'Liberation Sans', sans-serif;white-space:nowrap;">12月</div>
<div style="position:absolute;left:607px;top:866px;width:50px;height:50px;box-sizing:border-box;border:1px solid #dddddd;background:#fff;"></div>
<div style="position:absolute;left:631px;transform:translateX(-50%);top:875.0px;font-size:12px;line-height:16px;color:#111;font-family:'Liberation Sans', sans-serif;white-space:nowrap;">过去</div>
<div style="position:absolute;left:631px;transform:translateX(-50%);top:891.0px;font-size:12px;line-height:16px;color:#111;font-family:'Liberation Sans', sans-serif;white-space:nowrap;">3年</div>
<div style="position:absolute;left:631px;transform:translateX(-50%);top:701.0px;font-size:12px;line-height:16px;color:#111;font-family:'Liberation Sans', sans-serif;white-space:nowrap;">过去</div>
<div style="position:absolute;left:631px;transform:translateX(-50%);top:718.0px;font-size:12px;line-height:16px;color:#111;font-family:'Liberation Sans', sans-serif;white-space:nowrap;">48时</div>
<div style="position:absolute;left:667px;top:688px;width:1251px;height:389px;box-sizing:border-box;border:1px solid #d3d3d3;"></div>
<div style="position:absolute;left:674px;top:695px;width:1237px;height:375px;box-sizing:border-box;border:1px solid #a8a8a8;"></div>
<svg style="position:absolute;left:0;top:0" width="1920" height="1080" viewBox="0 0 1920 1080">
<line x1="702" y1="1040.5" x2="708" y2="1040.5" stroke="#a0a0a0" stroke-width="1"/>
<line x1="709" y1="989.5" x2="1899" y2="989.5" stroke="#dadada" stroke-width="1"/>
<line x1="702" y1="989.5" x2="708" y2="989.5" stroke="#a0a0a0" stroke-width="1"/>
<line x1="709" y1="939.5" x2="1899" y2="939.5" stroke="#dadada" stroke-width="1"/>
<line x1="702" y1="939.5" x2="708" y2="939.5" stroke="#a0a0a0" stroke-width="1"/>
<line x1="709" y1="888.5" x2="1899" y2="888.5" stroke="#dadada" stroke-width="1"/>
<line x1="702" y1="888.5" x2="708" y2="888.5" stroke="#a0a0a0" stroke-width="1"/>
<line x1="709" y1="838.5" x2="1899" y2="838.5" stroke="#dadada" stroke-width="1"/>
<line x1="702" y1="838.5" x2="708" y2="838.5" stroke="#a0a0a0" stroke-width="1"/>
<line x1="709" y1="787.5" x2="1899" y2="787.5" stroke="#dadada" stroke-width="1"/>
<line x1="702" y1="787.5" x2="708" y2="787.5" stroke="#a0a0a0" stroke-width="1"/>
<line x1="709" y1="736.5" x2="1899" y2="736.5" stroke="#dadada" stroke-width="1"/>
<line x1="702" y1="736.5" x2="708" y2="736.5" stroke="#a0a0a0" stroke-width="1"/>
<line x1="705" y1="1023.5" x2="708" y2="1023.5" stroke="#a0a0a0" stroke-width="1"/>
<line x1="705" y1="1006.5" x2="708" y2="1006.5" stroke="#a0a0a0" stroke-width="1"/>
<line x1="705" y1="973.5" x2="708" y2="973.5" stroke="#a0a0a0" stroke-width="1"/>
<line x1="705" y1="956.5" x2="708" y2="956.5" stroke="#a0a0a0" stroke-width="1"/>
<line x1="705" y1="922.5" x2="708" y2="922.5" stroke="#a0a0a0" stroke-width="1"/>
<line x1="705" y1="905.5" x2="708" y2="905.5" stroke="#a0a0a0" stroke-width="1"/>
<line x1="705" y1="871.5" x2="708" y2="871.5" stroke="#a0a0a0" stroke-width="1"/>
<line x1="705" y1="854.5" x2="708" y2="854.5" stroke="#a0a0a0" stroke-width="1"/>
<line x1="705" y1="821.5" x2="708" y2="821.5" stroke="#a0a0a0" stroke-width="1"/>
<line x1="705" y1="804.5" x2="708" y2="804.5" stroke="#a0a0a0" stroke-width="1"/>
<line x1="705" y1="770.5" x2="708" y2="770.5" stroke="#a0a0a0" stroke-width="1"/>
<line x1="705" y1="753.5" x2="708" y2="753.5" stroke="#a0a0a0" stroke-width="1"/>
<line x1="705" y1="720.5" x2="708" y2="720.5" stroke="#a0a0a0" stroke-width="1"/>
<rect x="708.5" y="706.5" width="1191" height="334" fill="none" stroke="#a8a8a8" stroke-width="1"/>
<rect x="720.8" y="838.1" width="14.0" height="201.4" fill="#4682b4" stroke="#3a6f9e" stroke-width="1"/>
<line x1="728.5" y1="827.6" x2="728.5" y2="837.6" stroke="#2f6799" stroke-width="1"/>
<rect x="717.5" y="813.5" width="21" height="15" fill="#fff" stroke="#2f6799" stroke-width="1"/>
<text x="727.3" y="824.1" text-anchor="middle" font-family="Liberation Sans" font-size="11" fill="#2f6799">0.4</text>
<rect x="745.3" y="838.1" width="14.0" height="201.4" fill="#4682b4" stroke="#3a6f9e" stroke-width="1"/>
<line x1="752.5" y1="827.6" x2="752.5" y2="837.6" stroke="#2f6799" stroke-width="1"/>
<rect x="742.5" y="813.5" width="21" height="15" fill="#fff" stroke="#2f6799" stroke-width="1"/>
<text x="751.8" y="824.1" text-anchor="middle" font-family="Liberation Sans" font-size="11" fill="#2f6799">0.4</text>
<rect x="769.8" y="838.1" width="14.0" height="201.4" fill="#4682b4" stroke="#3a6f9e" stroke-width="1"/>
<line x1="777.5" y1="827.6" x2="777.5" y2="837.6" stroke="#2f6799" stroke-width="1"/>
<rect x="766.5" y="813.5" width="21" height="15" fill="#fff" stroke="#2f6799" stroke-width="1"/>
<text x="776.3" y="824.1" text-anchor="middle" font-family="Liberation Sans" font-size="11" fill="#2f6799">0.4</text>
<rect x="794.4" y="787.5" width="14.0" height="252.0" fill="#4682b4" stroke="#3a6f9e" stroke-width="1"/>
<line x1="801.5" y1="777.0" x2="801.5" y2="787.0" stroke="#2f6799" stroke-width="1"/>
<rect x="791.5" y="762.5" width="21" height="15" fill="#fff" stroke="#2f6799" stroke-width="1"/>
<text x="800.9" y="773.5" text-anchor="middle" font-family="Liberation Sans" font-size="11" fill="#2f6799">0.5</text>
<rect x="818.9" y="838.1" width="14.0" height="201.4" fill="#4682b4" stroke="#3a6f9e" stroke-width="1"/>
<line x1="826.5" y1="827.6" x2="826.5" y2="837.6" stroke="#2f6799" stroke-width="1"/>
<rect x="815.5" y="813.5" width="21" height="15" fill="#fff" stroke="#2f6799" stroke-width="1"/>
<text x="825.4" y="824.1" text-anchor="middle" font-family="Liberation Sans" font-size="11" fill="#2f6799">0.4</text>
<rect x="843.4" y="838.1" width="14.0" height="201.4" fill="#4682b4" stroke="#3a6f9e" stroke-width="1"/>
<line x1="850.5" y1="827.6" x2="850.5" y2="837.6" stroke="#2f6799" stroke-width="1"/>
<rect x="840.5" y="813.5" width="21" height="15" fill="#fff" stroke="#2f6799" stroke-width="1"/>
<text x="849.9" y="824.1" text-anchor="middle" font-family="Liberation Sans" font-size="11" fill="#2f6799">0.4</text>
<rect x="867.9" y="838.1" width="14.0" height="201.4" fill="#4682b4" stroke="#3a6f9e" stroke-width="1"/>
<line x1="875.5" y1="827.6" x2="875.5" y2="837.6" stroke="#2f6799" stroke-width="1"/>
<rect x="864.5" y="813.5" width="21" height="15" fill="#fff" stroke="#2f6799" stroke-width="1"/>
<text x="874.4" y="824.1" text-anchor="middle" font-family="Liberation Sans" font-size="11" fill="#2f6799">0.4</text>
<rect x="892.4" y="838.1" width="14.0" height="201.4" fill="#4682b4" stroke="#3a6f9e" stroke-width="1"/>
<line x1="899.5" y1="827.6" x2="899.5" y2="837.6" stroke="#2f6799" stroke-width="1"/>
<rect x="889.5" y="813.5" width="21" height="15" fill="#fff" stroke="#2f6799" stroke-width="1"/>
<text x="898.9" y="824.1" text-anchor="middle" font-family="Liberation Sans" font-size="11" fill="#2f6799">0.4</text>
<rect x="917.0" y="838.1" width="14.0" height="201.4" fill="#4682b4" stroke="#3a6f9e" stroke-width="1"/>
<line x1="924.5" y1="827.6" x2="924.5" y2="837.6" stroke="#2f6799" stroke-width="1"/>
<rect x="913.5" y="813.5" width="21" height="15" fill="#fff" stroke="#2f6799" stroke-width="1"/>
<text x="923.5" y="824.1" text-anchor="middle" font-family="Liberation Sans" font-size="11" fill="#2f6799">0.4</text>
<rect x="941.5" y="736.9" width="14.0" height="302.6" fill="#4682b4" stroke="#3a6f9e" stroke-width="1"/>
<line x1="948.5" y1="726.4" x2="948.5" y2="736.4" stroke="#2f6799" stroke-width="1"/>
<rect x="938.5" y="711.5" width="21" height="15" fill="#fff" stroke="#2f6799" stroke-width="1"/>
<text x="948.0" y="722.9" text-anchor="middle" font-family="Liberation Sans" font-size="11" fill="#2f6799">0.6</text>
<rect x="966.0" y="736.9" width="14.0" height="302.6" fill="#4682b4" stroke="#3a6f9e" stroke-width="1"/>
<line x1="973.5" y1="726.4" x2="973.5" y2="736.4" stroke="#2f6799" stroke-width="1"/>
<rect x="962.5" y="711.5" width="21" height="15" fill="#fff" stroke="#2f6799" stroke-width="1"/>
<text x="972.5" y="722.9" text-anchor="middle" font-family="Liberation Sans" font-size="11" fill="#2f6799">0.6</text>
<rect x="990.5" y="787.5" width="14.0" height="252.0" fill="#4682b4" stroke="#3a6f9e" stroke-width="1"/>
<line x1="998.5" y1="777.0" x2="998.5" y2="787.0" stroke="#2f6799" stroke-width="1"/>
<rect x="987.5" y="762.5" width="21" height="15" fill="#fff" stroke="#2f6799" stroke-width="1"/>
<text x="997.0" y="773.5" text-anchor="middle" font-family="Liberation Sans" font-size="11" fill="#2f6799">0.5</text>
<rect x="1015.0" y="736.9" width="14.0" height="302.6" fill="#4682b4" stroke="#3a6f9e" stroke-width="1"/>
<line x1="1022.5" y1="726.4" x2="1022.5" y2="736.4" stroke="#2f6799" stroke-width="1"/>
<rect x="1012.5" y="711.5" width="21" height="15" fill="#fff" stroke="#2f6799" stroke-width="1"/>
<text x="1021.5" y="722.9" text-anchor="middle" font-family="Liberation Sans" font-size="11" fill="#2f6799">0.6</text>
<rect x="1039.6" y="787.5" width="14.0" height="252.0" fill="#4682b4" stroke="#3a6f9e" stroke-width="1"/>
<line x1="1047.5" y1="777.0" x2="1047.5" y2="787.0" stroke="#2f6799" stroke-width="1"/>
<rect x="1036.5" y="762.5" width="21" height="15" fill="#fff" stroke="#2f6799" stroke-width="1"/>
<text x="1046.1" y="773.5" text-anchor="middle" font-family="Liberation Sans" font-size="11" fill="#2f6799">0.5</text>
<rect x="1064.1" y="787.5" width="14.0" height="252.0" fill="#4682b4" stroke="#3a6f9e" stroke-width="1"/>
<line x1="1071.5" y1="777.0" x2="1071.5" y2="787.0" stroke="#2f6799" stroke-width="1"/>
<rect x="1061.5" y="762.5" width="21" height="15" fill="#fff" stroke="#2f6799" stroke-width="1"/>
<text x="1070.6" y="773.5" text-anchor="middle" font-family="Liberation Sans" font-size="11" fill="#2f6799">0.5</text>
<rect x="1088.6" y="838.1" width="14.0" height="201.4" fill="#4682b4" stroke="#3a6f9e" stroke-width="1"/>
<line x1="1096.5" y1="827.6" x2="1096.5" y2="837.6" stroke="#2f6799" stroke-width="1"/>
<rect x="1085.5" y="813.5" width="21" height="15" fill="#fff" stroke="#2f6799" stroke-width="1"/>
<text x="1095.1" y="824.1" text-anchor="middle" font-family="Liberation Sans" font-size="11" fill="#2f6799">0.4</text>
<rect x="1113.1" y="787.5" width="14.0" height="252.0" fill="#4682b4" stroke="#3a6f9e" stroke-width="1"/>
<line x1="1120.5" y1="777.0" x2="1120.5" y2="787.0" stroke="#2f6799" stroke-width="1"/>
<rect x="1110.5" y="762.5" width="21" height="15" fill="#fff" stroke="#2f6799" stroke-width="1"/>
<text x="1119.6" y="773.5" text-anchor="middle" font-family="Liberation Sans" font-size="11" fill="#2f6799">0.5</text>
<rect x="1137.6" y="787.5" width="14.0" height="252.0" fill="#4682b4" stroke="#3a6f9e" stroke-width="1"/>
<line x1="1145.5" y1="777.0" x2="1145.5" y2="787.0" stroke="#2f6799" stroke-width="1"/>
<rect x="1134.5" y="762.5" width="21" height="15" fill="#fff" stroke="#2f6799" stroke-width="1"/>
<text x="1144.1" y="773.5" text-anchor="middle" font-family="Liberation Sans" font-size="11" fill="#2f6799">0.5</text>
<rect x="1162.2" y="838.1" width="14.0" height="201.4" fill="#4682b4" stroke="#3a6f9e" stroke-width="1"/>
<line x1="1169.5" y1="827.6" x2="1169.5" y2="837.6" stroke="#2f6799" stroke-width="1"/>
<rect x="1159.5" y="813.5" width="21" height="15" fill="#fff" stroke="#2f6799" stroke-width="1"/>
<text x="1168.7" y="824.1" text-anchor="middle" font-family="Liberation Sans" font-size="11" fill="#2f6799">0.4</text>
<rect x="1186.7" y="787.5" width="14.0" height="252.0" fill="#4682b4" stroke="#3a6f9e" stroke-width="1"/>
<line x1="1194.5" y1="777.0" x2="1194.5" y2="787.0" stroke="#2f6799" stroke-width="1"/>
<rect x="1183.5" y="762.5" width="21" height="15" fill="#fff" stroke="#2f6799" stroke-width="1"/>
<text x="1193.2" y="773.5" text-anchor="middle" font-family="Liberation Sans" font-size="11" fill="#2f6799">0.5</text>
<rect x="1211.2" y="838.1" width="14.0" height="201.4" fill="#4682b4" stroke="#3a6f9e" stroke-width="1"/>
<line x1="1218.5" y1="827.6" x2="1218.5" y2="837.6" stroke="#2f6799" stroke-width="1"/>
<rect x="1208.5" y="813.5" width="21" height="15" fill="#fff" stroke="#2f6799" stroke-width="1"/>
<text x="1217.7" y="824.1" text-anchor="middle" font-family="Liberation Sans" font-size="11" fill="#2f6799">0.4</text>
<rect x="1235.7" y="787.5" width="14.0" height="252.0" fill="#4682b4" stroke="#3a6f9e" stroke-width="1"/>
<line x1="1243.5" y1="777.0" x2="1243.5" y2="787.0" stroke="#2f6799" stroke-width="1"/>
<rect x="1232.5" y="762.5" width="21" height="15" fill="#fff" stroke="#2f6799" stroke-width="1"/>
<text x="1242.2" y="773.5" text-anchor="middle" font-family="Liberation Sans" font-size="11" fill="#2f6799">0.5</text>
<rect x="1260.2" y="838.1" width="14.0" height="201.4" fill="#4682b4" stroke="#3a6f9e" stroke-width="1"/>
<line x1="1267.5" y1="827.6" x2="1267.5" y2="837.6" stroke="#2f6799" stroke-width="1"/>
<rect x="1257.5" y="813.5" width="21" height="15" fill="#fff" stroke="#2f6799" stroke-width="1"/>
<text x="1266.7" y="824.1" text-anchor="middle" font-family="Liberation Sans" font-size="11" fill="#2f6799">0.4</text>
<rect x="1284.8" y="787.5" width="14.0" height="252.0" fill="#4682b4" stroke="#3a6f9e" stroke-width="1"/>
<line x1="1292.5" y1="777.0" x2="1292.5" y2="787.0" stroke="#2f6799" stroke-width="1"/>
<rect x="1281.5" y="762.5" width="21" height="15" fill="#fff" stroke="#2f6799" stroke-width="1"/>
<text x="1291.3" y="773.5" text-anchor="middle" font-family="Liberation Sans" font-size="11" fill="#2f6799">0.5</text>
<rect x="1309.3" y="838.1" width="14.0" height="201.4" fill="#4682b4" stroke="#3a6f9e" stroke-width="1"/>
<line x1="1316.5" y1="827.6" x2="1316.5" y2="837.6" stroke="#2f6799" stroke-width="1"/>
<rect x="1306.5" y="813.5" width="21" height="15" fill="#fff" stroke="#2f6799" stroke-width="1"/>
<text x="1315.8" y="824.1" text-anchor="middle" font-family="Liberation Sans" font-size="11" fill="#2f6799">0.4</text>
<rect x="1333.8" y="838.1" width="14.0" height="201.4" fill="#4682b4" stroke="#3a6f9e" stroke-width="1"/>
<line x1="1341.5" y1="827.6" x2="1341.5" y2="837.6" stroke="#2f6799" stroke-width="1"/>
<rect x="1330.5" y="813.5" width="21" height="15" fill="#fff" stroke="#2f6799" stroke-width="1"/>
<text x="1340.3" y="824.1" text-anchor="middle" font-family="Liberation Sans" font-size="11" fill="#2f6799">0.4</text>
<rect x="1358.3" y="838.1" width="14.0" height="201.4" fill="#4682b4" stroke="#3a6f9e" stroke-width="1"/>
<line x1="1365.5" y1="827.6" x2="1365.5" y2="837.6" stroke="#2f6799" stroke-width="1"/>
<rect x="1355.5" y="813.5" width="21" height="15" fill="#fff" stroke="#2f6799" stroke-width="1"/>
<text x="1364.8" y="824.1" text-anchor="middle" font-family="Liberation Sans" font-size="11" fill="#2f6799">0.4</text>
<rect x="1382.8" y="838.1" width="14.0" height="201.4" fill="#4682b4" stroke="#3a6f9e" stroke-width="1"/>
<line x1="1390.5" y1="827.6" x2="1390.5" y2="837.6" stroke="#2f6799" stroke-width="1"/>
<rect x="1379.5" y="813.5" width="21" height="15" fill="#fff" stroke="#2f6799" stroke-width="1"/>
<text x="1389.3" y="824.1" text-anchor="middle" font-family="Liberation Sans" font-size="11" fill="#2f6799">0.4</text>
<rect x="1407.4" y="787.5" width="14.0" height="252.0" fill="#4682b4" stroke="#3a6f9e" stroke-width="1"/>
<line x1="1414.5" y1="777.0" x2="1414.5" y2="787.0" stroke="#2f6799" stroke-width="1"/>
<rect x="1404.5" y="762.5" width="21" height="15" fill="#fff" stroke="#2f6799" stroke-width="1"/>
<text x="1413.9" y="773.5" text-anchor="middle" font-family="Liberation Sans" font-size="11" fill="#2f6799">0.5</text>
<rect x="1431.9" y="838.1" width="14.0" height="201.4" fill="#4682b4" stroke="#3a6f9e" stroke-width="1"/>
<line x1="1439.5" y1="827.6" x2="1439.5" y2="837.6" stroke="#2f6799" stroke-width="1"/>
<rect x="1428.5" y="813.5" width="21" height="15" fill="#fff" stroke="#2f6799" stroke-width="1"/>
<text x="1438.4" y="824.1" text-anchor="middle" font-family="Liberation Sans" font-size="11" fill="#2f6799">0.4</text>
<rect x="1456.4" y="838.1" width="14.0" height="201.4" fill="#4682b4" stroke="#3a6f9e" stroke-width="1"/>
<line x1="1463.5" y1="827.6" x2="1463.5" y2="837.6" stroke="#2f6799" stroke-width="1"/>
<rect x="1453.5" y="813.5" width="21" height="15" fill="#fff" stroke="#2f6799" stroke-width="1"/>
<text x="1462.9" y="824.1" text-anchor="middle" font-family="Liberation Sans" font-size="11" fill="#2f6799">0.4</text>
<rect x="1480.9" y="787.5" width="14.0" height="252.0" fill="#4682b4" stroke="#3a6f9e" stroke-width="1"/>
<line x1="1488.5" y1="777.0" x2="1488.5" y2="787.0" stroke="#2f6799" stroke-width="1"/>
<rect x="1477.5" y="762.5" width="21" height="15" fill="#fff" stroke="#2f6799" stroke-width="1"/>
<text x="1487.4" y="773.5" text-anchor="middle" font-family="Liberation Sans" font-size="11" fill="#2f6799">0.5</text>
<rect x="1505.4" y="838.1" width="14.0" height="201.4" fill="#4682b4" stroke="#3a6f9e" stroke-width="1"/>
<line x1="1512.5" y1="827.6" x2="1512.5" y2="837.6" stroke="#2f6799" stroke-width="1"/>
<rect x="1502.5" y="813.5" width="21" height="15" fill="#fff" stroke="#2f6799" stroke-width="1"/>
<text x="1511.9" y="824.1" text-anchor="middle" font-family="Liberation Sans" font-size="11" fill="#2f6799">0.4</text>
<rect x="1530.0" y="838.1" width="14.0" height="201.4" fill="#4682b4" stroke="#3a6f9e" stroke-width="1"/>
<line x1="1537.5" y1="827.6" x2="1537.5" y2="837.6" stroke="#2f6799" stroke-width="1"/>
<rect x="1526.5" y="813.5" width="21" height="15" fill="#fff" stroke="#2f6799" stroke-width="1"/>
<text x="1536.5" y="824.1" text-anchor="middle" font-family="Liberation Sans" font-size="11" fill="#2f6799">0.4</text>
<rect x="1554.5" y="838.1" width="14.0" height="201.4" fill="#4682b4" stroke="#3a6f9e" stroke-width="1"/>
<line x1="1561.5" y1="827.6" x2="1561.5" y2="837.6" stroke="#2f6799" stroke-width="1"/>
<rect x="1551.5" y="813.5" width="21" height="15" fill="#fff" stroke="#2f6799" stroke-width="1"/>
<text x="1561.0" y="824.1" text-anchor="middle" font-family="Liberation Sans" font-size="11" fill="#2f6799">0.4</text>
<rect x="1579.0" y="838.1" width="14.0" height="201.4" fill="#4682b4" stroke="#3a6f9e" stroke-width="1"/>
<line x1="1586.5" y1="827.6" x2="1586.5" y2="837.6" stroke="#2f6799" stroke-width="1"/>
<rect x="1576.5" y="813.5" width="21" height="15" fill="#fff" stroke="#2f6799" stroke-width="1"/>
<text x="1585.5" y="824.1" text-anchor="middle" font-family="Liberation Sans" font-size="11" fill="#2f6799">0.4</text>
<rect x="1603.5" y="787.5" width="14.0" height="252.0" fill="#4682b4" stroke="#3a6f9e" stroke-width="1"/>
<line x1="1611.5" y1="777.0" x2="1611.5" y2="787.0" stroke="#2f6799" stroke-width="1"/>
<rect x="1600.5" y="762.5" width="21" height="15" fill="#fff" stroke="#2f6799" stroke-width="1"/>
<text x="1610.0" y="773.5" text-anchor="middle" font-family="Liberation Sans" font-size="11" fill="#2f6799">0.5</text>
<rect x="1628.0" y="838.1" width="14.0" height="201.4" fill="#4682b4" stroke="#3a6f9e" stroke-width="1"/>
<line x1="1635.5" y1="827.6" x2="1635.5" y2="837.6" stroke="#2f6799" stroke-width="1"/>
<rect x="1625.5" y="813.5" width="21" height="15" fill="#fff" stroke="#2f6799" stroke-width="1"/>
<text x="1634.5" y="824.1" text-anchor="middle" font-family="Liberation Sans" font-size="11" fill="#2f6799">0.4</text>
<rect x="1652.6" y="838.1" width="14.0" height="201.4" fill="#4682b4" stroke="#3a6f9e" stroke-width="1"/>
<line x1="1660.5" y1="827.6" x2="1660.5" y2="837.6" stroke="#2f6799" stroke-width="1"/>
<rect x="1649.5" y="813.5" width="21" height="15" fill="#fff" stroke="#2f6799" stroke-width="1"/>
<text x="1659.1" y="824.1" text-anchor="middle" font-family="Liberation Sans" font-size="11" fill="#2f6799">0.4</text>
<rect x="1677.1" y="838.1" width="14.0" height="201.4" fill="#4682b4" stroke="#3a6f9e" stroke-width="1"/>
<line x1="1684.5" y1="827.6" x2="1684.5" y2="837.6" stroke="#2f6799" stroke-width="1"/>
<rect x="1674.5" y="813.5" width="21" height="15" fill="#fff" stroke="#2f6799" stroke-width="1"/>
<text x="1683.6" y="824.1" text-anchor="middle" font-family="Liberation Sans" font-size="11" fill="#2f6799">0.4</text>
<rect x="1701.6" y="838.1" width="14.0" height="201.4" fill="#4682b4" stroke="#3a6f9e" stroke-width="1"/>
<line x1="1709.5" y1="827.6" x2="1709.5" y2="837.6" stroke="#2f6799" stroke-width="1"/>
<rect x="1698.5" y="813.5" width="21" height="15" fill="#fff" stroke="#2f6799" stroke-width="1"/>
<text x="1708.1" y="824.1" text-anchor="middle" font-family="Liberation Sans" font-size="11" fill="#2f6799">0.4</text>
<rect x="1726.1" y="787.5" width="14.0" height="252.0" fill="#4682b4" stroke="#3a6f9e" stroke-width="1"/>
<line x1="1733.5" y1="777.0" x2="1733.5" y2="787.0" stroke="#2f6799" stroke-width="1"/>
<rect x="1723.5" y="762.5" width="21" height="15" fill="#fff" stroke="#2f6799" stroke-width="1"/>
<text x="1732.6" y="773.5" text-anchor="middle" font-family="Liberation Sans" font-size="11" fill="#2f6799">0.5</text>
<rect x="1750.6" y="838.1" width="14.0" height="201.4" fill="#4682b4" stroke="#3a6f9e" stroke-width="1"/>
<line x1="1758.5" y1="827.6" x2="1758.5" y2="837.6" stroke="#2f6799" stroke-width="1"/>
<rect x="1747.5" y="813.5" width="21" height="15" fill="#fff" stroke="#2f6799" stroke-width="1"/>
<text x="1757.1" y="824.1" text-anchor="middle" font-family="Liberation Sans" font-size="11" fill="#2f6799">0.4</text>
<rect x="1775.2" y="838.1" width="14.0" height="201.4" fill="#4682b4" stroke="#3a6f9e" stroke-width="1"/>
<line x1="1782.5" y1="827.6" x2="1782.5" y2="837.6" stroke="#2f6799" stroke-width="1"/>
<rect x="1772.5" y="813.5" width="21" height="15" fill="#fff" stroke="#2f6799" stroke-width="1"/>
<text x="1781.7" y="824.1" text-anchor="middle" font-family="Liberation Sans" font-size="11" fill="#2f6799">0.4</text>
<rect x="1799.7" y="787.5" width="14.0" height="252.0" fill="#4682b4" stroke="#3a6f9e" stroke-width="1"/>
<line x1="1807.5" y1="777.0" x2="1807.5" y2="787.0" stroke="#2f6799" stroke-width="1"/>
<rect x="1796.5" y="762.5" width="21" height="15" fill="#fff" stroke="#2f6799" stroke-width="1"/>
<text x="1806.2" y="773.5" text-anchor="middle" font-family="Liberation Sans" font-size="11" fill="#2f6799">0.5</text>
<rect x="1824.2" y="838.1" width="14.0" height="201.4" fill="#4682b4" stroke="#3a6f9e" stroke-width="1"/>
<line x1="1831.5" y1="827.6" x2="1831.5" y2="837.6" stroke="#2f6799" stroke-width="1"/>
<rect x="1821.5" y="813.5" width="21" height="15" fill="#fff" stroke="#2f6799" stroke-width="1"/>
<text x="1830.7" y="824.1" text-anchor="middle" font-family="Liberation Sans" font-size="11" fill="#2f6799">0.4</text>
<rect x="1848.7" y="838.1" width="14.0" height="201.4" fill="#4682b4" stroke="#3a6f9e" stroke-width="1"/>
<line x1="1856.5" y1="827.6" x2="1856.5" y2="837.6" stroke="#2f6799" stroke-width="1"/>
<rect x="1845.5" y="813.5" width="21" height="15" fill="#fff" stroke="#2f6799" stroke-width="1"/>
<text x="1855.2" y="824.1" text-anchor="middle" font-family="Liberation Sans" font-size="11" fill="#2f6799">0.4</text>
<rect x="1873.2" y="989.9" width="14.0" height="49.6" fill="#4682b4" stroke="#3a6f9e" stroke-width="1"/>
<line x1="1880.5" y1="979.4" x2="1880.5" y2="989.4" stroke="#2f6799" stroke-width="1"/>
<rect x="1870.5" y="964.5" width="21" height="15" fill="#fff" stroke="#2f6799" stroke-width="1"/>
<text x="1879.7" y="975.9" text-anchor="middle" font-family="Liberation Sans" font-size="11" fill="#2f6799">0.1</text>
<line x1="717.5" y1="1040" x2="717.5" y2="1043" stroke="#a0a0a0" stroke-width="1"/>
<line x1="727.5" y1="1040" x2="727.5" y2="1046" stroke="#a0a0a0" stroke-width="1"/>
<line x1="737.5" y1="1040" x2="737.5" y2="1043" stroke="#a0a0a0" stroke-width="1"/>
<line x1="746.5" y1="1040" x2="746.5" y2="1043" stroke="#a0a0a0" stroke-width="1"/>
<line x1="756.5" y1="1040" x2="756.5" y2="1043" stroke="#a0a0a0" stroke-width="1"/>
<line x1="766.5" y1="1040" x2="766.5" y2="1043" stroke="#a0a0a0" stroke-width="1"/>
<line x1="776.5" y1="1040" x2="776.5" y2="1046" stroke="#a0a0a0" stroke-width="1"/>
<line x1="786.5" y1="1040" x2="786.5" y2="1043" stroke="#a0a0a0" stroke-width="1"/>
<line x1="795.5" y1="1040" x2="795.5" y2="1043" stroke="#a0a0a0" stroke-width="1"/>
<line x1="805.5" y1="1040" x2="805.5" y2="1043" stroke="#a0a0a0" stroke-width="1"/>
<line x1="815.5" y1="1040" x2="815.5" y2="1043" stroke="#a0a0a0" stroke-width="1"/>
<line x1="825.5" y1="1040" x2="825.5" y2="1046" stroke="#a0a0a0" stroke-width="1"/>
<line x1="835.5" y1="1040" x2="835.5" y2="1043" stroke="#a0a0a0" stroke-width="1"/>
<line x1="844.5" y1="1040" x2="844.5" y2="1043" stroke="#a0a0a0" stroke-width="1"/>
<line x1="854.5" y1="1040" x2="854.5" y2="1043" stroke="#a0a0a0" stroke-width="1"/>
<line x1="864.5" y1="1040" x2="864.5" y2="1043" stroke="#a0a0a0" stroke-width="1"/>
<line x1="874.5" y1="1040" x2="874.5" y2="1046" stroke="#a0a0a0" stroke-width="1"/>
<line x1="884.5" y1="1040" x2="884.5" y2="1043" stroke="#a0a0a0" stroke-width="1"/>
<line x1="894.5" y1="1040" x2="894.5" y2="1043" stroke="#a0a0a0" stroke-width="1"/>
<line x1="903.5" y1="1040" x2="903.5" y2="1043" stroke="#a0a0a0" stroke-width="1"/>
<line x1="913.5" y1="1040" x2="913.5" y2="1043" stroke="#a0a0a0" stroke-width="1"/>
<line x1="923.5" y1="1040" x2="923.5" y2="1046" stroke="#a0a0a0" stroke-width="1"/>
<line x1="933.5" y1="1040" x2="933.5" y2="1043" stroke="#a0a0a0" stroke-width="1"/>
<line x1="943.5" y1="1040" x2="943.5" y2="1043" stroke="#a0a0a0" stroke-width="1"/>
<line x1="952.5" y1="1040" x2="952.5" y2="1043" stroke="#a0a0a0" stroke-width="1"/>
<line x1="962.5" y1="1040" x2="962.5" y2="1043" stroke="#a0a0a0" stroke-width="1"/>
<line x1="972.5" y1="1040" x2="972.5" y2="1046" stroke="#a0a0a0" stroke-width="1"/>
<line x1="982.5" y1="1040" x2="982.5" y2="1043" stroke="#a0a0a0" stroke-width="1"/>
<line x1="992.5" y1="1040" x2="992.5" y2="1043" stroke="#a0a0a0" stroke-width="1"/>
<line x1="1001.5" y1="1040" x2="1001.5" y2="1043" stroke="#a0a0a0" stroke-width="1"/>
<line x1="1011.5" y1="1040" x2="1011.5" y2="1043" stroke="#a0a0a0" stroke-width="1"/>
<line x1="1021.5" y1="1040" x2="1021.5" y2="1046" stroke="#a0a0a0" stroke-width="1"/>
<line x1="1031.5" y1="1040" x2="1031.5" y2="1043" stroke="#a0a0a0" stroke-width="1"/>
<line x1="1041.5" y1="1040" x2="1041.5" y2="1043" stroke="#a0a0a0" stroke-width="1"/>
<line x1="1050.5" y1="1040" x2="1050.5" y2="1043" stroke="#a0a0a0" stroke-width="1"/>
<line x1="1060.5" y1="1040" x2="1060.5" y2="1043" stroke="#a0a0a0" stroke-width="1"/>
<line x1="1070.5" y1="1040" x2="1070.5" y2="1046" stroke="#a0a0a0" stroke-width="1"/>
<line x1="1080.5" y1="1040" x2="1080.5" y2="1043" stroke="#a0a0a0" stroke-width="1"/>
<line x1="1090.5" y1="1040" x2="1090.5" y2="1043" stroke="#a0a0a0" stroke-width="1"/>
<line x1="1100.5" y1="1040" x2="1100.5" y2="1043" stroke="#a0a0a0" stroke-width="1"/>
<line x1="1109.5" y1="1040" x2="1109.5" y2="1043" stroke="#a0a0a0" stroke-width="1"/>
<line x1="1119.5" y1="1040" x2="1119.5" y2="1046" stroke="#a0a0a0" stroke-width="1"/>
<line x1="1129.5" y1="1040" x2="1129.5" y2="1043" stroke="#a0a0a0" stroke-width="1"/>
<line x1="1139.5" y1="1040" x2="1139.5" y2="1043" stroke="#a0a0a0" stroke-width="1"/>
<line x1="1149.5" y1="1040" x2="1149.5" y2="1043" stroke="#a0a0a0" stroke-width="1"/>
<line x1="1158.5" y1="1040" x2="1158.5" y2="1043" stroke="#a0a0a0" stroke-width="1"/>
<line x1="1168.5" y1="1040" x2="1168.5" y2="1046" stroke="#a0a0a0" stroke-width="1"/>
<line x1="1178.5" y1="1040" x2="1178.5" y2="1043" stroke="#a0a0a0" stroke-width="1"/>
<line x1="1188.5" y1="1040" x2="1188.5" y2="1043" stroke="#a0a0a0" stroke-width="1"/>
<line x1="1198.5" y1="1040" x2="1198.5" y2="1043" stroke="#a0a0a0" stroke-width="1"/>
<line x1="1207.5" y1="1040" x2="1207.5" y2="1043" stroke="#a0a0a0" stroke-width="1"/>
<line x1="1217.5" y1="1040" x2="1217.5" y2="1046" stroke="#a0a0a0" stroke-width="1"/>
<line x1="1227.5" y1="1040" x2="1227.5" y2="1043" stroke="#a0a0a0" stroke-width="1"/>
<line x1="1237.5" y1="1040" x2="1237.5" y2="1043" stroke="#a0a0a0" stroke-width="1"/>
<line x1="1247.5" y1="1040" x2="1247.5" y2="1043" stroke="#a0a0a0" stroke-width="1"/>
<line x1="1256.5" y1="1040" x2="1256.5" y2="1043" stroke="#a0a0a0" stroke-width="1"/>
<line x1="1266.5" y1="1040" x2="1266.5" y2="1046" stroke="#a0a0a0" stroke-width="1"/>
<line x1="1276.5" y1="1040" x2="1276.5" y2="1043" stroke="#a0a0a0" stroke-width="1"/>
<line x1="1286.5" y1="1040" x2="1286.5" y2="1043" stroke="#a0a0a0" stroke-width="1"/>
<line x1="1296.5" y1="1040" x2="1296.5" y2="1043" stroke="#a0a0a0" stroke-width="1"/>
<line x1="1305.5" y1="1040" x2="1305.5" y2="1043" stroke="#a0a0a0" stroke-width="1"/>
<line x1="1315.5" y1="1040" x2="1315.5" y2="1046" stroke="#a0a0a0" stroke-width="1"/>
<line x1="1325.5" y1="1040" x2="1325.5" y2="1043" stroke="#a0a0a0" stroke-width="1"/>
<line x1="1335.5" y1="1040" x2="1335.5" y2="1043" stroke="#a0a0a0" stroke-width="1"/>
<line x1="1345.5" y1="1040" x2="1345.5" y2="1043" stroke="#a0a0a0" stroke-width="1"/>
<line x1="1355.5" y1="1040" x2="1355.5" y2="1043" stroke="#a0a0a0" stroke-width="1"/>
<line x1="1364.5" y1="1040" x2="1364.5" y2="1046" stroke="#a0a0a0" stroke-width="1"/>
<line x1="1374.5" y1="1040" x2="1374.5" y2="1043" stroke="#a0a0a0" stroke-width="1"/>
<line x1="1384.5" y1="1040" x2="1384.5" y2="1043" stroke="#a0a0a0" stroke-width="1"/>
<line x1="1394.5" y1="1040" x2="1394.5" y2="1043" stroke="#a0a0a0" stroke-width="1"/>
<line x1="1404.5" y1="1040" x2="1404.5" y2="1043" stroke="#a0a0a0" stroke-width="1"/>
<line x1="1413.5" y1="1040" x2="1413.5" y2="1046" stroke="#a0a0a0" stroke-width="1"/>
<line x1="1423.5" y1="1040" x2="1423.5" y2="1043" stroke="#a0a0a0" stroke-width="1"/>
<line x1="1433.5" y1="1040" x2="1433.5" y2="1043" stroke="#a0a0a0" stroke-width="1"/>
<line x1="1443.5" y1="1040" x2="1443.5" y2="1043" stroke="#a0a0a0" stroke-width="1"/>
<line x1="1453.5" y1="1040" x2="1453.5" y2="1043" stroke="#a0a0a0" stroke-width="1"/>
<line x1="1462.5" y1="1040" x2="1462.5" y2="1046" stroke="#a0a0a0" stroke-width="1"/>
<line x1="1472.5" y1="1040" x2="1472.5" y2="1043" stroke="#a0a0a0" stroke-width="1"/>
<line x1="1482.5" y1="1040" x2="1482.5" y2="1043" stroke="#a0a0a0" stroke-width="1"/>
<line x1="1492.5" y1="1040" x2="1492.5" y2="1043" stroke="#a0a0a0" stroke-width="1"/>
<line x1="1502.5" y1="1040" x2="1502.5" y2="1043" stroke="#a0a0a0" stroke-width="1"/>
<line x1="1511.5" y1="1040" x2="1511.5" y2="1046" stroke="#a0a0a0" stroke-width="1"/>
<line x1="1521.5" y1="1040" x2="1521.5" y2="1043" stroke="#a0a0a0" stroke-width="1"/>
<line x1="1531.5" y1="1040" x2="1531.5" y2="1043" stroke="#a0a0a0" stroke-width="1"/>
<line x1="1541.5" y1="1040" x2="1541.5" y2="1043" stroke="#a0a0a0" stroke-width="1"/>
<line x1="1551.5" y1="1040" x2="1551.5" y2="1043" stroke="#a0a0a0" stroke-width="1"/>
<line x1="1560.5" y1="1040" x2="1560.5" y2="1046" stroke="#a0a0a0" stroke-width="1"/>
<line x1="1570.5" y1="1040" x2="1570.5" y2="1043" stroke="#a0a0a0" stroke-width="1"/>
<line x1="1580.5" y1="1040" x2="1580.5" y2="1043" stroke="#a0a0a0" stroke-width="1"/>
<line x1="1590.5" y1="1040" x2="1590.5" y2="1043" stroke="#a0a0a0" stroke-width="1"/>
<line x1="1600.5" y1="1040" x2="1600.5" y2="1043" stroke="#a0a0a0" stroke-width="1"/>
<line x1="1610.5" y1="1040" x2="1610.5" y2="1046" stroke="#a0a0a0" stroke-width="1"/>
<line x1="1619.5" y1="1040" x2="1619.5" y2="1043" stroke="#a0a0a0" stroke-width="1"/>
<line x1="1629.5" y1="1040" x2="1629.5" y2="1043" stroke="#a0a0a0" stroke-width="1"/>
<line x1="1639.5" y1="1040" x2="1639.5" y2="1043" stroke="#a0a0a0" stroke-width="1"/>
<line x1="1649.5" y1="1040" x2="1649.5" y2="1043" stroke="#a0a0a0" stroke-width="1"/>
<line x1="1659.5" y1="1040" x2="1659.5" y2="1046" stroke="#a0a0a0" stroke-width="1"/>
<line x1="1668.5" y1="1040" x2="1668.5" y2="1043" stroke="#a0a0a0" stroke-width="1"/>
<line x1="1678.5" y1="1040" x2="1678.5" y2="1043" stroke="#a0a0a0" stroke-width="1"/>
<line x1="1688.5" y1="1040" x2="1688.5" y2="1043" stroke="#a0a0a0" stroke-width="1"/>
<line x1="1698.5" y1="1040" x2="1698.5" y2="1043" stroke="#a0a0a0" stroke-width="1"/>
<line x1="1708.5" y1="1040" x2="1708.5" y2="1046" stroke="#a0a0a0" stroke-width="1"/>
<line x1="1717.5" y1="1040" x2="1717.5" y2="1043" stroke="#a0a0a0" stroke-width="1"/>
<line x1="1727.5" y1="1040" x2="1727.5" y2="1043" stroke="#a0a0a0" stroke-width="1"/>
<line x1="1737.5" y1="1040" x2="1737.5" y2="1043" stroke="#a0a0a0" stroke-width="1"/>
<line x1="1747.5" y1="1040" x2="1747.5" y2="1043" stroke="#a0a0a0" stroke-width="1"/>
<line x1="1757.5" y1="1040" x2="1757.5" y2="1046" stroke="#a0a0a0" stroke-width="1"/>
<line x1="1766.5" y1="1040" x2="1766.5" y2="1043" stroke="#a0a0a0" stroke-width="1"/>
<line x1="1776.5" y1="1040" x2="1776.5" y2="1043" stroke="#a0a0a0" stroke-width="1"/>
<line x1="1786.5" y1="1040" x2="1786.5" y2="1043" stroke="#a0a0a0" stroke-width="1"/>
<line x1="1796.5" y1="1040" x2="1796.5" y2="1043" stroke="#a0a0a0" stroke-width="1"/>
<line x1="1806.5" y1="1040" x2="1806.5" y2="1046" stroke="#a0a0a0" stroke-width="1"/>
<line x1="1815.5" y1="1040" x2="1815.5" y2="1043" stroke="#a0a0a0" stroke-width="1"/>
<line x1="1825.5" y1="1040" x2="1825.5" y2="1043" stroke="#a0a0a0" stroke-width="1"/>
<line x1="1835.5" y1="1040" x2="1835.5" y2="1043" stroke="#a0a0a0" stroke-width="1"/>
<line x1="1845.5" y1="1040" x2="1845.5" y2="1043" stroke="#a0a0a0" stroke-width="1"/>
<line x1="1855.5" y1="1040" x2="1855.5" y2="1046" stroke="#a0a0a0" stroke-width="1"/>
<line x1="1865.5" y1="1040" x2="1865.5" y2="1043" stroke="#a0a0a0" stroke-width="1"/>
<line x1="1874.5" y1="1040" x2="1874.5" y2="1043" stroke="#a0a0a0" stroke-width="1"/>
<line x1="1884.5" y1="1040" x2="1884.5" y2="1043" stroke="#a0a0a0" stroke-width="1"/>
<line x1="1894.5" y1="1040" x2="1894.5" y2="1043" stroke="#a0a0a0" stroke-width="1"/>
</svg>
<div style="position:absolute;right:1223px;top:1032.5px;font-size:11px;line-height:15px;color:#333;font-family:'Liberation Sans', sans-serif;white-space:nowrap;">0</div>
<div style="position:absolute;right:1223px;top:981.9px;font-size:11px;line-height:15px;color:#333;font-family:'Liberation Sans', sans-serif;white-space:nowrap;">0.1</div>
<div style="position:absolute;right:1223px;top:931.3px;font-size:11px;line-height:15px;color:#333;font-family:'Liberation Sans', sans-serif;white-space:nowrap;">0.2</div>
<div style="position:absolute;right:1223px;top:880.7px;font-size:11px;line-height:15px;color:#333;font-family:'Liberation Sans', sans-serif;white-space:nowrap;">0.3</div>
<div style="position:absolute;right:1223px;top:830.1px;font-size:11px;line-height:15px;color:#333;font-family:'Liberation Sans', sans-serif;white-space:nowrap;">0.4</div>
<div style="position:absolute;right:1223px;top:779.5px;font-size:11px;line-height:15px;color:#333;font-family:'Liberation Sans', sans-serif;white-space:nowrap;">0.5</div>
<div style="position:absolute;right:1223px;top:728.9px;font-size:11px;line-height:15px;color:#333;font-family:'Liberation Sans', sans-serif;white-space:nowrap;">0.6</div>
<div style="position:absolute;left:727.8px;transform:translateX(-50%);top:1048.5px;font-size:11px;line-height:15px;color:#333;font-family:'Liberation Sans', sans-serif;white-space:nowrap;">14<span style="color:#8a8a8a">时</span></div>
<div style="position:absolute;left:776.8399999999999px;transform:translateX(-50%);top:1048.5px;font-size:11px;line-height:15px;color:#333;font-family:'Liberation Sans', sans-serif;white-space:nowrap;">16<span style="color:#8a8a8a">时</span></div>
<div style="position:absolute;left:825.88px;transform:translateX(-50%);top:1048.5px;font-size:11px;line-height:15px;color:#333;font-family:'Liberation Sans', sans-serif;white-space:nowrap;">18<span style="color:#8a8a8a">时</span></div>
<div style="position:absolute;left:874.92px;transform:translateX(-50%);top:1048.5px;font-size:11px;line-height:15px;color:#333;font-family:'Liberation Sans', sans-serif;white-space:nowrap;">20<span style="color:#8a8a8a">时</span></div>
<div style="position:absolute;left:923.9599999999999px;transform:translateX(-50%);top:1048.5px;font-size:11px;line-height:15px;color:#333;font-family:'Liberation Sans', sans-serif;white-space:nowrap;">22<span style="color:#8a8a8a">时</span></div>
<div style="position:absolute;left:973.0px;transform:translateX(-50%);top:1048.5px;font-size:11px;line-height:15px;color:#333;font-family:'Liberation Sans', sans-serif;white-space:nowrap;">00<span style="color:#8a8a8a">时</span></div>
<div style="position:absolute;left:1022.04px;transform:translateX(-50%);top:1048.5px;font-size:11px;line-height:15px;color:#333;font-family:'Liberation Sans', sans-serif;white-space:nowrap;">02<span style="color:#8a8a8a">时</span></div>
<div style="position:absolute;left:1071.08px;transform:translateX(-50%);top:1048.5px;font-size:11px;line-height:15px;color:#333;font-family:'Liberation Sans', sans-serif;white-space:nowrap;">04<span style="color:#8a8a8a">时</span></div>
<div style="position:absolute;left:1120.12px;transform:translateX(-50%);top:1048.5px;font-size:11px;line-height:15px;color:#333;font-family:'Liberation Sans', sans-serif;white-space:nowrap;">06<span style="color:#8a8a8a">时</span></div>
<div style="position:absolute;left:1169.1599999999999px;transform:translateX(-50%);top:1048.5px;font-size:11px;line-height:15px;color:#333;font-family:'Liberation Sans', sans-serif;white-space:nowrap;">08<span style="color:#8a8a8a">时</span></div>
<div style="position:absolute;left:1218.1999999999998px;transform:translateX(-50%);top:1048.5px;font-size:11px;line-height:15px;color:#333;font-family:'Liberation Sans', sans-serif;white-space:nowrap;">10<span style="color:#8a8a8a">时</span></div>
<div style="position:absolute;left:1267.2399999999998px;transform:translateX(-50%);top:1048.5px;font-size:11px;line-height:15px;color:#333;font-family:'Liberation Sans', sans-serif;white-space:nowrap;">12<span style="color:#8a8a8a">时</span></div>
<div style="position:absolute;left:1316.28px;transform:translateX(-50%);top:1048.5px;font-size:11px;line-height:15px;color:#333;font-family:'Liberation Sans', sans-serif;white-space:nowrap;">14<span style="color:#8a8a8a">时</span></div>
<div style="position:absolute;left:1365.32px;transform:translateX(-50%);top:1048.5px;font-size:11px;line-height:15px;color:#333;font-family:'Liberation Sans', sans-serif;white-space:nowrap;">16<span style="color:#8a8a8a">时</span></div>
<div style="position:absolute;left:1414.36px;transform:translateX(-50%);top:1048.5px;font-size:11px;line-height:15px;color:#333;font-family:'Liberation Sans', sans-serif;white-space:nowrap;">18<span style="color:#8a8a8a">时</span></div>
<div style="position:absolute;left:1463.4px;transform:translateX(-50%);top:1048.5px;font-size:11px;line-height:15px;color:#333;font-family:'Liberation Sans', sans-serif;white-space:nowrap;">20<span style="color:#8a8a8a">时</span></div>
<div style="position:absolute;left:1512.44px;transform:translateX(-50%);top:1048.5px;font-size:11px;line-height:15px;color:#333;font-family:'Liberation Sans', sans-serif;white-space:nowrap;">22<span style="color:#8a8a8a">时</span></div>
<div style="position:absolute;left:1561.48px;transform:translateX(-50%);top:1048.5px;font-size:11px;line-height:15px;color:#333;font-family:'Liberation Sans', sans-serif;white-space:nowrap;">00<span style="color:#8a8a8a">时</span></div>
<div style="position:absolute;left:1610.52px;transform:translateX(-50%);top:1048.5px;font-size:11px;line-height:15px;color:#333;font-family:'Liberation Sans', sans-serif;white-space:nowrap;">02<span style="color:#8a8a8a">时</span></div>
<div style="position:absolute;left:1659.56px;transform:translateX(-50%);top:1048.5px;font-size:11px;line-height:15px;color:#333;font-family:'Liberation Sans', sans-serif;white-space:nowrap;">04<span style="color:#8a8a8a">时</span></div>
<div style="position:absolute;left:1708.6px;transform:translateX(-50%);top:1048.5px;font-size:11px;line-height:15px;color:#333;font-family:'Liberation Sans', sans-serif;white-space:nowrap;">06<span style="color:#8a8a8a">时</span></div>
<div style="position:absolute;left:1757.6399999999999px;transform:translateX(-50%);top:1048.5px;font-size:11px;line-height:15px;color:#333;font-family:'Liberation Sans', sans-serif;white-space:nowrap;">08<span style="color:#8a8a8a">时</span></div>
<div style="position:absolute;left:1806.6799999999998px;transform:translateX(-50%);top:1048.5px;font-size:11px;line-height:15px;color:#333;font-family:'Liberation Sans', sans-serif;white-space:nowrap;">10<span style="color:#8a8a8a">时</span></div>
<div style="position:absolute;left:1855.72px;transform:translateX(-50%);top:1048.5px;font-size:11px;line-height:15px;color:#333;font-family:'Liberation Sans', sans-serif;white-space:nowrap;">12<span style="color:#8a8a8a">时</span></div>
</body></html>
